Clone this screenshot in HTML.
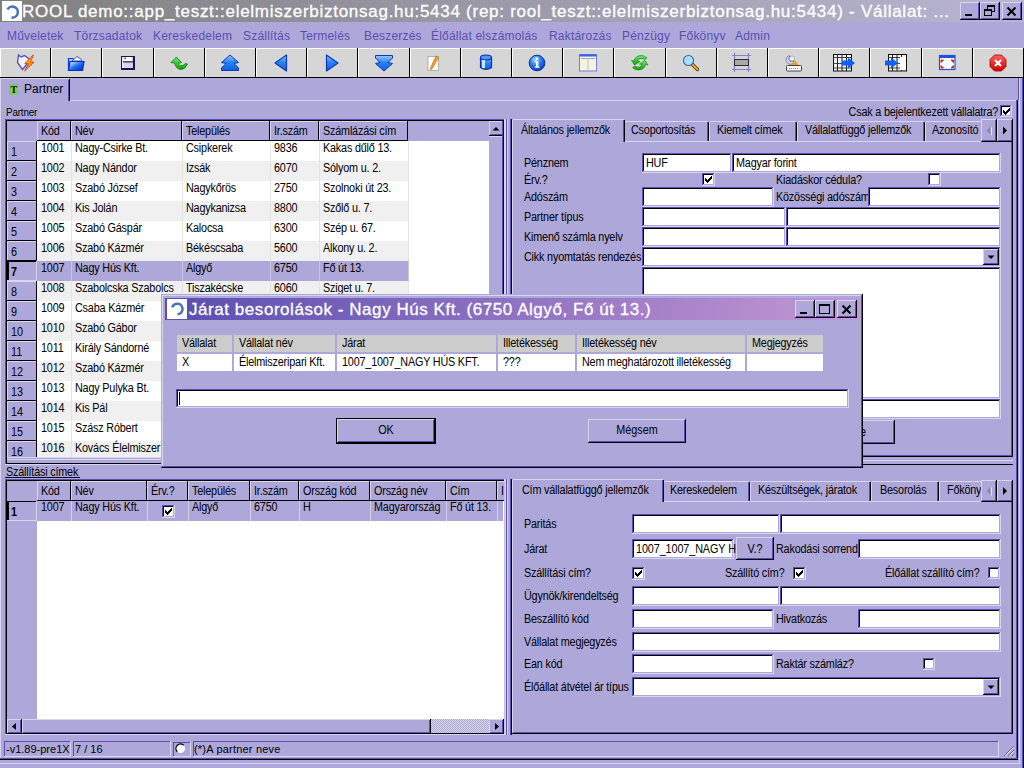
<!DOCTYPE html><html><head><meta charset="utf-8"><style>html,body{margin:0;padding:0;width:1024px;height:768px;overflow:hidden;background:#ADA8D9;position:relative;font-family:"Liberation Sans", sans-serif}.a{position:absolute;box-sizing:border-box}.t{position:absolute;white-space:pre;font-family:"Liberation Sans", sans-serif}</style></head><body><div class="a" style="left:0;top:0;width:1024px;height:22px;background:linear-gradient(to right,#808080,#B9B5D3)"></div><div class="a" style="left:2px;top:1px;width:20px;height:20px;background:#FFFFFF;"></div><svg class="a" style="left:2px;top:1px" width="20" height="20" viewBox="0 0 20 20"><path d="M5.5 8.5 A5.5 5.5 0 1 1 9.5 16.5" fill="none" stroke="#4A74C0" stroke-width="2.6"/></svg><div class="t" style="left:22px;top:2.61px;font-size:17px;line-height:17px;color:#fff;font-weight:400;letter-spacing:0.73px;-webkit-text-stroke:0.3px #fff">ROOL demo::app_teszt::elelmiszerbiztonsag.hu:5434 (rep: rool_teszt::elelmiszerbiztonsag.hu:5434) - Vállalat: ...</div><div class="a" style="left:960px;top:2px;width:20px;height:18px;background:#ADA8D9;"></div><div class="a" style="left:960px;top:2px;width:20px;height:1px;background:#D8D5EC;"></div><div class="a" style="left:960px;top:2px;width:1px;height:18px;background:#D8D5EC;"></div><div class="a" style="left:960px;top:19px;width:20px;height:1px;background:#000000;"></div><div class="a" style="left:979px;top:2px;width:1px;height:18px;background:#000000;"></div><div class="a" style="left:961px;top:18px;width:18px;height:1px;background:#5A4EB1;"></div><div class="a" style="left:978px;top:3px;width:1px;height:16px;background:#5A4EB1;"></div><div class="a" style="left:980px;top:2px;width:20px;height:18px;background:#ADA8D9;"></div><div class="a" style="left:980px;top:2px;width:20px;height:1px;background:#D8D5EC;"></div><div class="a" style="left:980px;top:2px;width:1px;height:18px;background:#D8D5EC;"></div><div class="a" style="left:980px;top:19px;width:20px;height:1px;background:#000000;"></div><div class="a" style="left:999px;top:2px;width:1px;height:18px;background:#000000;"></div><div class="a" style="left:981px;top:18px;width:18px;height:1px;background:#5A4EB1;"></div><div class="a" style="left:998px;top:3px;width:1px;height:16px;background:#5A4EB1;"></div><div class="a" style="left:1002px;top:2px;width:20px;height:18px;background:#ADA8D9;"></div><div class="a" style="left:1002px;top:2px;width:20px;height:1px;background:#D8D5EC;"></div><div class="a" style="left:1002px;top:2px;width:1px;height:18px;background:#D8D5EC;"></div><div class="a" style="left:1002px;top:19px;width:20px;height:1px;background:#000000;"></div><div class="a" style="left:1021px;top:2px;width:1px;height:18px;background:#000000;"></div><div class="a" style="left:1003px;top:18px;width:18px;height:1px;background:#5A4EB1;"></div><div class="a" style="left:1020px;top:3px;width:1px;height:16px;background:#5A4EB1;"></div><svg class="a" style="left:960px;top:2px" width="20" height="18" viewBox="0 0 20 18"><rect x="5" y="12" width="7" height="2" fill="#000"/></svg><svg class="a" style="left:980px;top:2px" width="20" height="18" viewBox="0 0 20 18"><rect x="7.5" y="3.5" width="7" height="6" fill="none" stroke="#000"/><rect x="7" y="3" width="8" height="2" fill="#000"/><rect x="4.5" y="7.5" width="7" height="6" fill="#ADA8D9" stroke="#000"/><rect x="4" y="7" width="8" height="2" fill="#000"/></svg><svg class="a" style="left:1002px;top:2px" width="20" height="18" viewBox="0 0 20 18"><path d="M5.5 5.5 L13.5 13.5 M13.5 5.5 L5.5 13.5" stroke="#000" stroke-width="2"/></svg><div class="t" style="left:7px;top:29.84px;font-size:12px;line-height:12px;color:#5A4EB1;font-weight:400;letter-spacing:0.2px;">Műveletek</div><div class="t" style="left:74px;top:29.84px;font-size:12px;line-height:12px;color:#5A4EB1;font-weight:400;letter-spacing:0.2px;">Törzsadatok</div><div class="t" style="left:153px;top:29.84px;font-size:12px;line-height:12px;color:#5A4EB1;font-weight:400;letter-spacing:0.2px;">Kereskedelem</div><div class="t" style="left:243px;top:29.84px;font-size:12px;line-height:12px;color:#5A4EB1;font-weight:400;letter-spacing:0.2px;">Szállítás</div><div class="t" style="left:300px;top:29.84px;font-size:12px;line-height:12px;color:#5A4EB1;font-weight:400;letter-spacing:0.2px;">Termelés</div><div class="t" style="left:364px;top:29.84px;font-size:12px;line-height:12px;color:#5A4EB1;font-weight:400;letter-spacing:0.2px;">Beszerzés</div><div class="t" style="left:431px;top:29.84px;font-size:12px;line-height:12px;color:#5A4EB1;font-weight:400;letter-spacing:0.2px;">Élőállat elszámolás</div><div class="t" style="left:549px;top:29.84px;font-size:12px;line-height:12px;color:#5A4EB1;font-weight:400;letter-spacing:0.2px;">Raktározás</div><div class="t" style="left:622px;top:29.84px;font-size:12px;line-height:12px;color:#5A4EB1;font-weight:400;letter-spacing:0.2px;">Pénzügy</div><div class="t" style="left:679px;top:29.84px;font-size:12px;line-height:12px;color:#5A4EB1;font-weight:400;letter-spacing:0.2px;">Főkönyv</div><div class="t" style="left:735px;top:29.84px;font-size:12px;line-height:12px;color:#5A4EB1;font-weight:400;letter-spacing:0.2px;">Admin</div><div class="a" style="left:0px;top:48px;width:51px;height:30px;background:#D6D6D6;"></div><div class="a" style="left:0px;top:48px;width:50px;height:1px;background:#FFFFFF;"></div><div class="a" style="left:0px;top:48px;width:1px;height:29px;background:#FFFFFF;"></div><div class="a" style="left:0px;top:77px;width:51px;height:1px;background:#000000;"></div><div class="a" style="left:50px;top:48px;width:1px;height:30px;background:#000000;"></div><div class="a" style="left:51px;top:48px;width:51px;height:30px;background:#D6D6D6;"></div><div class="a" style="left:51px;top:48px;width:50px;height:1px;background:#FFFFFF;"></div><div class="a" style="left:51px;top:48px;width:1px;height:29px;background:#FFFFFF;"></div><div class="a" style="left:51px;top:77px;width:51px;height:1px;background:#000000;"></div><div class="a" style="left:101px;top:48px;width:1px;height:30px;background:#000000;"></div><div class="a" style="left:102px;top:48px;width:52px;height:30px;background:#D6D6D6;"></div><div class="a" style="left:102px;top:48px;width:51px;height:1px;background:#FFFFFF;"></div><div class="a" style="left:102px;top:48px;width:1px;height:29px;background:#FFFFFF;"></div><div class="a" style="left:102px;top:77px;width:52px;height:1px;background:#000000;"></div><div class="a" style="left:153px;top:48px;width:1px;height:30px;background:#000000;"></div><div class="a" style="left:154px;top:48px;width:51px;height:30px;background:#D6D6D6;"></div><div class="a" style="left:154px;top:48px;width:50px;height:1px;background:#FFFFFF;"></div><div class="a" style="left:154px;top:48px;width:1px;height:29px;background:#FFFFFF;"></div><div class="a" style="left:154px;top:77px;width:51px;height:1px;background:#000000;"></div><div class="a" style="left:204px;top:48px;width:1px;height:30px;background:#000000;"></div><div class="a" style="left:205px;top:48px;width:51px;height:30px;background:#D6D6D6;"></div><div class="a" style="left:205px;top:48px;width:50px;height:1px;background:#FFFFFF;"></div><div class="a" style="left:205px;top:48px;width:1px;height:29px;background:#FFFFFF;"></div><div class="a" style="left:205px;top:77px;width:51px;height:1px;background:#000000;"></div><div class="a" style="left:255px;top:48px;width:1px;height:30px;background:#000000;"></div><div class="a" style="left:256px;top:48px;width:51px;height:30px;background:#D6D6D6;"></div><div class="a" style="left:256px;top:48px;width:50px;height:1px;background:#FFFFFF;"></div><div class="a" style="left:256px;top:48px;width:1px;height:29px;background:#FFFFFF;"></div><div class="a" style="left:256px;top:77px;width:51px;height:1px;background:#000000;"></div><div class="a" style="left:306px;top:48px;width:1px;height:30px;background:#000000;"></div><div class="a" style="left:307px;top:48px;width:51px;height:30px;background:#D6D6D6;"></div><div class="a" style="left:307px;top:48px;width:50px;height:1px;background:#FFFFFF;"></div><div class="a" style="left:307px;top:48px;width:1px;height:29px;background:#FFFFFF;"></div><div class="a" style="left:307px;top:77px;width:51px;height:1px;background:#000000;"></div><div class="a" style="left:357px;top:48px;width:1px;height:30px;background:#000000;"></div><div class="a" style="left:358px;top:48px;width:52px;height:30px;background:#D6D6D6;"></div><div class="a" style="left:358px;top:48px;width:51px;height:1px;background:#FFFFFF;"></div><div class="a" style="left:358px;top:48px;width:1px;height:29px;background:#FFFFFF;"></div><div class="a" style="left:358px;top:77px;width:52px;height:1px;background:#000000;"></div><div class="a" style="left:409px;top:48px;width:1px;height:30px;background:#000000;"></div><div class="a" style="left:410px;top:48px;width:51px;height:30px;background:#D6D6D6;"></div><div class="a" style="left:410px;top:48px;width:50px;height:1px;background:#FFFFFF;"></div><div class="a" style="left:410px;top:48px;width:1px;height:29px;background:#FFFFFF;"></div><div class="a" style="left:410px;top:77px;width:51px;height:1px;background:#000000;"></div><div class="a" style="left:460px;top:48px;width:1px;height:30px;background:#000000;"></div><div class="a" style="left:461px;top:48px;width:51px;height:30px;background:#D6D6D6;"></div><div class="a" style="left:461px;top:48px;width:50px;height:1px;background:#FFFFFF;"></div><div class="a" style="left:461px;top:48px;width:1px;height:29px;background:#FFFFFF;"></div><div class="a" style="left:461px;top:77px;width:51px;height:1px;background:#000000;"></div><div class="a" style="left:511px;top:48px;width:1px;height:30px;background:#000000;"></div><div class="a" style="left:512px;top:48px;width:51px;height:30px;background:#D6D6D6;"></div><div class="a" style="left:512px;top:48px;width:50px;height:1px;background:#FFFFFF;"></div><div class="a" style="left:512px;top:48px;width:1px;height:29px;background:#FFFFFF;"></div><div class="a" style="left:512px;top:77px;width:51px;height:1px;background:#000000;"></div><div class="a" style="left:562px;top:48px;width:1px;height:30px;background:#000000;"></div><div class="a" style="left:563px;top:48px;width:51px;height:30px;background:#D6D6D6;"></div><div class="a" style="left:563px;top:48px;width:50px;height:1px;background:#FFFFFF;"></div><div class="a" style="left:563px;top:48px;width:1px;height:29px;background:#FFFFFF;"></div><div class="a" style="left:563px;top:77px;width:51px;height:1px;background:#000000;"></div><div class="a" style="left:613px;top:48px;width:1px;height:30px;background:#000000;"></div><div class="a" style="left:614px;top:48px;width:52px;height:30px;background:#D6D6D6;"></div><div class="a" style="left:614px;top:48px;width:51px;height:1px;background:#FFFFFF;"></div><div class="a" style="left:614px;top:48px;width:1px;height:29px;background:#FFFFFF;"></div><div class="a" style="left:614px;top:77px;width:52px;height:1px;background:#000000;"></div><div class="a" style="left:665px;top:48px;width:1px;height:30px;background:#000000;"></div><div class="a" style="left:666px;top:48px;width:51px;height:30px;background:#D6D6D6;"></div><div class="a" style="left:666px;top:48px;width:50px;height:1px;background:#FFFFFF;"></div><div class="a" style="left:666px;top:48px;width:1px;height:29px;background:#FFFFFF;"></div><div class="a" style="left:666px;top:77px;width:51px;height:1px;background:#000000;"></div><div class="a" style="left:716px;top:48px;width:1px;height:30px;background:#000000;"></div><div class="a" style="left:717px;top:48px;width:51px;height:30px;background:#D6D6D6;"></div><div class="a" style="left:717px;top:48px;width:50px;height:1px;background:#FFFFFF;"></div><div class="a" style="left:717px;top:48px;width:1px;height:29px;background:#FFFFFF;"></div><div class="a" style="left:717px;top:77px;width:51px;height:1px;background:#000000;"></div><div class="a" style="left:767px;top:48px;width:1px;height:30px;background:#000000;"></div><div class="a" style="left:768px;top:48px;width:51px;height:30px;background:#D6D6D6;"></div><div class="a" style="left:768px;top:48px;width:50px;height:1px;background:#FFFFFF;"></div><div class="a" style="left:768px;top:48px;width:1px;height:29px;background:#FFFFFF;"></div><div class="a" style="left:768px;top:77px;width:51px;height:1px;background:#000000;"></div><div class="a" style="left:818px;top:48px;width:1px;height:30px;background:#000000;"></div><div class="a" style="left:819px;top:48px;width:51px;height:30px;background:#D6D6D6;"></div><div class="a" style="left:819px;top:48px;width:50px;height:1px;background:#FFFFFF;"></div><div class="a" style="left:819px;top:48px;width:1px;height:29px;background:#FFFFFF;"></div><div class="a" style="left:819px;top:77px;width:51px;height:1px;background:#000000;"></div><div class="a" style="left:869px;top:48px;width:1px;height:30px;background:#000000;"></div><div class="a" style="left:870px;top:48px;width:52px;height:30px;background:#D6D6D6;"></div><div class="a" style="left:870px;top:48px;width:51px;height:1px;background:#FFFFFF;"></div><div class="a" style="left:870px;top:48px;width:1px;height:29px;background:#FFFFFF;"></div><div class="a" style="left:870px;top:77px;width:52px;height:1px;background:#000000;"></div><div class="a" style="left:921px;top:48px;width:1px;height:30px;background:#000000;"></div><div class="a" style="left:922px;top:48px;width:51px;height:30px;background:#D6D6D6;"></div><div class="a" style="left:922px;top:48px;width:50px;height:1px;background:#FFFFFF;"></div><div class="a" style="left:922px;top:48px;width:1px;height:29px;background:#FFFFFF;"></div><div class="a" style="left:922px;top:77px;width:51px;height:1px;background:#000000;"></div><div class="a" style="left:972px;top:48px;width:1px;height:30px;background:#000000;"></div><div class="a" style="left:973px;top:48px;width:51px;height:30px;background:#D6D6D6;"></div><div class="a" style="left:973px;top:48px;width:50px;height:1px;background:#FFFFFF;"></div><div class="a" style="left:973px;top:48px;width:1px;height:29px;background:#FFFFFF;"></div><div class="a" style="left:973px;top:77px;width:51px;height:1px;background:#000000;"></div><div class="a" style="left:1023px;top:48px;width:1px;height:30px;background:#000000;"></div><div class="a" style="left:0px;top:78px;width:70px;height:23px;background:#ADA8D9;"></div><div class="a" style="left:0px;top:78px;width:1px;height:23px;background:#D8D5EC;"></div><div class="a" style="left:1px;top:78px;width:68px;height:1px;background:#D8D5EC;"></div><div class="a" style="left:69px;top:79px;width:1px;height:22px;background:#000000;"></div><div class="a" style="left:68px;top:80px;width:1px;height:21px;background:#5A4EB1;"></div><div class="a" style="left:70px;top:100px;width:947px;height:1px;background:#D8D5EC;"></div><div class="a" style="left:9px;top:84px;width:9px;height:11px;background:#7FC860;"></div><div class="t" style="left:10.5px;top:84.53px;font-size:10px;line-height:10px;color:#201000;font-weight:700;letter-spacing:0px;font-family:'Liberation Serif'">T</div><div class="t" style="left:24px;top:82.84px;font-size:12px;line-height:12px;color:#000;font-weight:400;letter-spacing:0px;">Partner</div><div class="t" style="left:6px;top:106.69px;font-size:11px;line-height:11px;color:#000;font-weight:400;letter-spacing:-0.2px;transform:scaleX(0.9);transform-origin:left;">Partner</div><div class="t" style="right:26px;top:105.84px;font-size:12px;line-height:12px;color:#000;font-weight:400;letter-spacing:-0.2px;transform:scaleX(0.9);transform-origin:right;">Csak a bejelentkezett vállalatra?</div><div class="a" style="left:1000px;top:105px;width:12px;height:12px;background:#FFFFFF;"></div><div class="a" style="left:1000px;top:105px;width:12px;height:1px;background:#5A4EB1;"></div><div class="a" style="left:1000px;top:105px;width:1px;height:12px;background:#5A4EB1;"></div><div class="a" style="left:1001px;top:106px;width:10px;height:1px;background:#000000;"></div><div class="a" style="left:1001px;top:106px;width:1px;height:10px;background:#000000;"></div><div class="a" style="left:1001px;top:115px;width:10px;height:1px;background:#ADA8D9;"></div><div class="a" style="left:1010px;top:106px;width:1px;height:10px;background:#ADA8D9;"></div><div class="a" style="left:1000px;top:116px;width:12px;height:1px;background:#D8D5EC;"></div><div class="a" style="left:1011px;top:105px;width:1px;height:12px;background:#D8D5EC;"></div><svg class="a" style="left:1000px;top:105px" width="12" height="12" shape-rendering="crispEdges" fill="#000"><rect x="9" y="3" width="1" height="1"/><rect x="8" y="4" width="1" height="1"/><rect x="9" y="4" width="1" height="1"/><rect x="3" y="5" width="1" height="1"/><rect x="7" y="5" width="1" height="1"/><rect x="8" y="5" width="1" height="1"/><rect x="9" y="5" width="1" height="1"/><rect x="3" y="6" width="1" height="1"/><rect x="4" y="6" width="1" height="1"/><rect x="6" y="6" width="1" height="1"/><rect x="7" y="6" width="1" height="1"/><rect x="8" y="6" width="1" height="1"/><rect x="3" y="7" width="1" height="1"/><rect x="4" y="7" width="1" height="1"/><rect x="5" y="7" width="1" height="1"/><rect x="6" y="7" width="1" height="1"/><rect x="7" y="7" width="1" height="1"/><rect x="4" y="8" width="1" height="1"/><rect x="5" y="8" width="1" height="1"/><rect x="6" y="8" width="1" height="1"/><rect x="5" y="9" width="1" height="1"/></svg><div class="a" style="left:5px;top:119px;width:500px;height:346px;background:#FFFFFF;"></div><div class="a" style="left:5px;top:119px;width:500px;height:1px;background:#5A4EB1;"></div><div class="a" style="left:5px;top:119px;width:1px;height:346px;background:#5A4EB1;"></div><div class="a" style="left:6px;top:120px;width:498px;height:1px;background:#000000;"></div><div class="a" style="left:6px;top:120px;width:1px;height:344px;background:#000000;"></div><div class="a" style="left:5px;top:464px;width:500px;height:1px;background:#D8D5EC;"></div><div class="a" style="left:504px;top:119px;width:1px;height:346px;background:#D8D5EC;"></div><div class="a" style="left:7px;top:121px;width:482px;height:20px;background:#ADA8D9;"></div><div class="a" style="left:37px;top:121px;width:34px;height:20px;background:#ADA8D9;"></div><div class="a" style="left:37px;top:121px;width:34px;height:1px;background:#D8D5EC;"></div><div class="a" style="left:37px;top:121px;width:1px;height:20px;background:#D8D5EC;"></div><div class="a" style="left:37px;top:140px;width:34px;height:1px;background:#000000;"></div><div class="a" style="left:70px;top:121px;width:1px;height:20px;background:#000000;"></div><div class="t" style="left:41px;top:124.84px;font-size:12px;line-height:12px;color:#000;font-weight:400;letter-spacing:-0.2px;transform:scaleX(0.9);transform-origin:left;">Kód</div><div class="a" style="left:71px;top:121px;width:111px;height:20px;background:#ADA8D9;"></div><div class="a" style="left:71px;top:121px;width:111px;height:1px;background:#D8D5EC;"></div><div class="a" style="left:71px;top:121px;width:1px;height:20px;background:#D8D5EC;"></div><div class="a" style="left:71px;top:140px;width:111px;height:1px;background:#000000;"></div><div class="a" style="left:181px;top:121px;width:1px;height:20px;background:#000000;"></div><div class="t" style="left:75px;top:124.84px;font-size:12px;line-height:12px;color:#000;font-weight:400;letter-spacing:-0.2px;transform:scaleX(0.9);transform-origin:left;">Név</div><div class="a" style="left:182px;top:121px;width:88px;height:20px;background:#ADA8D9;"></div><div class="a" style="left:182px;top:121px;width:88px;height:1px;background:#D8D5EC;"></div><div class="a" style="left:182px;top:121px;width:1px;height:20px;background:#D8D5EC;"></div><div class="a" style="left:182px;top:140px;width:88px;height:1px;background:#000000;"></div><div class="a" style="left:269px;top:121px;width:1px;height:20px;background:#000000;"></div><div class="t" style="left:186px;top:124.84px;font-size:12px;line-height:12px;color:#000;font-weight:400;letter-spacing:-0.2px;transform:scaleX(0.9);transform-origin:left;">Település</div><div class="a" style="left:270px;top:121px;width:49px;height:20px;background:#ADA8D9;"></div><div class="a" style="left:270px;top:121px;width:49px;height:1px;background:#D8D5EC;"></div><div class="a" style="left:270px;top:121px;width:1px;height:20px;background:#D8D5EC;"></div><div class="a" style="left:270px;top:140px;width:49px;height:1px;background:#000000;"></div><div class="a" style="left:318px;top:121px;width:1px;height:20px;background:#000000;"></div><div class="t" style="left:274px;top:124.84px;font-size:12px;line-height:12px;color:#000;font-weight:400;letter-spacing:-0.2px;transform:scaleX(0.9);transform-origin:left;">Ir.szám</div><div class="a" style="left:319px;top:121px;width:89px;height:20px;background:#ADA8D9;"></div><div class="a" style="left:319px;top:121px;width:89px;height:1px;background:#D8D5EC;"></div><div class="a" style="left:319px;top:121px;width:1px;height:20px;background:#D8D5EC;"></div><div class="a" style="left:319px;top:140px;width:89px;height:1px;background:#000000;"></div><div class="a" style="left:407px;top:121px;width:1px;height:20px;background:#000000;"></div><div class="t" style="left:323px;top:124.84px;font-size:12px;line-height:12px;color:#000;font-weight:400;letter-spacing:-0.2px;transform:scaleX(0.9);transform-origin:left;">Számlázási cím</div><div class="a" style="left:37px;top:141px;width:371px;height:20px;background:#FFFFFF;"></div><div class="a" style="left:71px;top:141px;width:1px;height:20px;background:#E4E4E4;"></div><div class="a" style="left:182px;top:141px;width:1px;height:20px;background:#E4E4E4;"></div><div class="a" style="left:270px;top:141px;width:1px;height:20px;background:#E4E4E4;"></div><div class="a" style="left:319px;top:141px;width:1px;height:20px;background:#E4E4E4;"></div><div class="a" style="left:408px;top:141px;width:1px;height:20px;background:#E4E4E4;"></div><div class="a" style="left:7px;top:141px;width:30px;height:20px;background:#ADA8D9;"></div><div class="a" style="left:7px;top:141px;width:30px;height:1px;background:#D8D5EC;"></div><div class="a" style="left:7px;top:141px;width:1px;height:20px;background:#D8D5EC;"></div><div class="a" style="left:7px;top:160px;width:30px;height:1px;background:#000000;"></div><div class="a" style="left:36px;top:141px;width:1px;height:20px;background:#000000;"></div><div class="t" style="left:11px;top:145.84px;font-size:12px;line-height:12px;color:#000;font-weight:400;letter-spacing:0px;transform:scaleX(0.9);transform-origin:left;">1</div><div class="t" style="left:41px;top:141.84px;font-size:12px;line-height:12px;color:#000;font-weight:400;letter-spacing:-0.2px;transform:scaleX(0.9);transform-origin:left;">1001</div><div class="t" style="left:75px;top:141.84px;font-size:12px;line-height:12px;color:#000;font-weight:400;letter-spacing:-0.2px;transform:scaleX(0.9);transform-origin:left;">Nagy-Csirke Bt.</div><div class="t" style="left:186px;top:141.84px;font-size:12px;line-height:12px;color:#000;font-weight:400;letter-spacing:-0.2px;transform:scaleX(0.9);transform-origin:left;">Csipkerek</div><div class="t" style="left:274px;top:141.84px;font-size:12px;line-height:12px;color:#000;font-weight:400;letter-spacing:-0.2px;transform:scaleX(0.9);transform-origin:left;">9836</div><div class="t" style="left:323px;top:141.84px;font-size:12px;line-height:12px;color:#000;font-weight:400;letter-spacing:-0.2px;transform:scaleX(0.9);transform-origin:left;">Kakas dűlő 13.</div><div class="a" style="left:37px;top:161px;width:371px;height:20px;background:#F0F0F0;"></div><div class="a" style="left:71px;top:161px;width:1px;height:20px;background:#E4E4E4;"></div><div class="a" style="left:182px;top:161px;width:1px;height:20px;background:#E4E4E4;"></div><div class="a" style="left:270px;top:161px;width:1px;height:20px;background:#E4E4E4;"></div><div class="a" style="left:319px;top:161px;width:1px;height:20px;background:#E4E4E4;"></div><div class="a" style="left:408px;top:161px;width:1px;height:20px;background:#E4E4E4;"></div><div class="a" style="left:7px;top:161px;width:30px;height:20px;background:#ADA8D9;"></div><div class="a" style="left:7px;top:161px;width:30px;height:1px;background:#D8D5EC;"></div><div class="a" style="left:7px;top:161px;width:1px;height:20px;background:#D8D5EC;"></div><div class="a" style="left:7px;top:180px;width:30px;height:1px;background:#000000;"></div><div class="a" style="left:36px;top:161px;width:1px;height:20px;background:#000000;"></div><div class="t" style="left:11px;top:165.84px;font-size:12px;line-height:12px;color:#000;font-weight:400;letter-spacing:0px;transform:scaleX(0.9);transform-origin:left;">2</div><div class="t" style="left:41px;top:161.84px;font-size:12px;line-height:12px;color:#000;font-weight:400;letter-spacing:-0.2px;transform:scaleX(0.9);transform-origin:left;">1002</div><div class="t" style="left:75px;top:161.84px;font-size:12px;line-height:12px;color:#000;font-weight:400;letter-spacing:-0.2px;transform:scaleX(0.9);transform-origin:left;">Nagy Nándor</div><div class="t" style="left:186px;top:161.84px;font-size:12px;line-height:12px;color:#000;font-weight:400;letter-spacing:-0.2px;transform:scaleX(0.9);transform-origin:left;">Izsák</div><div class="t" style="left:274px;top:161.84px;font-size:12px;line-height:12px;color:#000;font-weight:400;letter-spacing:-0.2px;transform:scaleX(0.9);transform-origin:left;">6070</div><div class="t" style="left:323px;top:161.84px;font-size:12px;line-height:12px;color:#000;font-weight:400;letter-spacing:-0.2px;transform:scaleX(0.9);transform-origin:left;">Sólyom u. 2.</div><div class="a" style="left:37px;top:181px;width:371px;height:20px;background:#FFFFFF;"></div><div class="a" style="left:71px;top:181px;width:1px;height:20px;background:#E4E4E4;"></div><div class="a" style="left:182px;top:181px;width:1px;height:20px;background:#E4E4E4;"></div><div class="a" style="left:270px;top:181px;width:1px;height:20px;background:#E4E4E4;"></div><div class="a" style="left:319px;top:181px;width:1px;height:20px;background:#E4E4E4;"></div><div class="a" style="left:408px;top:181px;width:1px;height:20px;background:#E4E4E4;"></div><div class="a" style="left:7px;top:181px;width:30px;height:20px;background:#ADA8D9;"></div><div class="a" style="left:7px;top:181px;width:30px;height:1px;background:#D8D5EC;"></div><div class="a" style="left:7px;top:181px;width:1px;height:20px;background:#D8D5EC;"></div><div class="a" style="left:7px;top:200px;width:30px;height:1px;background:#000000;"></div><div class="a" style="left:36px;top:181px;width:1px;height:20px;background:#000000;"></div><div class="t" style="left:11px;top:185.84px;font-size:12px;line-height:12px;color:#000;font-weight:400;letter-spacing:0px;transform:scaleX(0.9);transform-origin:left;">3</div><div class="t" style="left:41px;top:181.84px;font-size:12px;line-height:12px;color:#000;font-weight:400;letter-spacing:-0.2px;transform:scaleX(0.9);transform-origin:left;">1003</div><div class="t" style="left:75px;top:181.84px;font-size:12px;line-height:12px;color:#000;font-weight:400;letter-spacing:-0.2px;transform:scaleX(0.9);transform-origin:left;">Szabó József</div><div class="t" style="left:186px;top:181.84px;font-size:12px;line-height:12px;color:#000;font-weight:400;letter-spacing:-0.2px;transform:scaleX(0.9);transform-origin:left;">Nagykőrös</div><div class="t" style="left:274px;top:181.84px;font-size:12px;line-height:12px;color:#000;font-weight:400;letter-spacing:-0.2px;transform:scaleX(0.9);transform-origin:left;">2750</div><div class="t" style="left:323px;top:181.84px;font-size:12px;line-height:12px;color:#000;font-weight:400;letter-spacing:-0.2px;transform:scaleX(0.9);transform-origin:left;">Szolnoki út 23.</div><div class="a" style="left:37px;top:201px;width:371px;height:20px;background:#F0F0F0;"></div><div class="a" style="left:71px;top:201px;width:1px;height:20px;background:#E4E4E4;"></div><div class="a" style="left:182px;top:201px;width:1px;height:20px;background:#E4E4E4;"></div><div class="a" style="left:270px;top:201px;width:1px;height:20px;background:#E4E4E4;"></div><div class="a" style="left:319px;top:201px;width:1px;height:20px;background:#E4E4E4;"></div><div class="a" style="left:408px;top:201px;width:1px;height:20px;background:#E4E4E4;"></div><div class="a" style="left:7px;top:201px;width:30px;height:20px;background:#ADA8D9;"></div><div class="a" style="left:7px;top:201px;width:30px;height:1px;background:#D8D5EC;"></div><div class="a" style="left:7px;top:201px;width:1px;height:20px;background:#D8D5EC;"></div><div class="a" style="left:7px;top:220px;width:30px;height:1px;background:#000000;"></div><div class="a" style="left:36px;top:201px;width:1px;height:20px;background:#000000;"></div><div class="t" style="left:11px;top:205.84px;font-size:12px;line-height:12px;color:#000;font-weight:400;letter-spacing:0px;transform:scaleX(0.9);transform-origin:left;">4</div><div class="t" style="left:41px;top:201.84px;font-size:12px;line-height:12px;color:#000;font-weight:400;letter-spacing:-0.2px;transform:scaleX(0.9);transform-origin:left;">1004</div><div class="t" style="left:75px;top:201.84px;font-size:12px;line-height:12px;color:#000;font-weight:400;letter-spacing:-0.2px;transform:scaleX(0.9);transform-origin:left;">Kis Jolán</div><div class="t" style="left:186px;top:201.84px;font-size:12px;line-height:12px;color:#000;font-weight:400;letter-spacing:-0.2px;transform:scaleX(0.9);transform-origin:left;">Nagykanizsa</div><div class="t" style="left:274px;top:201.84px;font-size:12px;line-height:12px;color:#000;font-weight:400;letter-spacing:-0.2px;transform:scaleX(0.9);transform-origin:left;">8800</div><div class="t" style="left:323px;top:201.84px;font-size:12px;line-height:12px;color:#000;font-weight:400;letter-spacing:-0.2px;transform:scaleX(0.9);transform-origin:left;">Szőlő u. 7.</div><div class="a" style="left:37px;top:221px;width:371px;height:20px;background:#FFFFFF;"></div><div class="a" style="left:71px;top:221px;width:1px;height:20px;background:#E4E4E4;"></div><div class="a" style="left:182px;top:221px;width:1px;height:20px;background:#E4E4E4;"></div><div class="a" style="left:270px;top:221px;width:1px;height:20px;background:#E4E4E4;"></div><div class="a" style="left:319px;top:221px;width:1px;height:20px;background:#E4E4E4;"></div><div class="a" style="left:408px;top:221px;width:1px;height:20px;background:#E4E4E4;"></div><div class="a" style="left:7px;top:221px;width:30px;height:20px;background:#ADA8D9;"></div><div class="a" style="left:7px;top:221px;width:30px;height:1px;background:#D8D5EC;"></div><div class="a" style="left:7px;top:221px;width:1px;height:20px;background:#D8D5EC;"></div><div class="a" style="left:7px;top:240px;width:30px;height:1px;background:#000000;"></div><div class="a" style="left:36px;top:221px;width:1px;height:20px;background:#000000;"></div><div class="t" style="left:11px;top:225.84px;font-size:12px;line-height:12px;color:#000;font-weight:400;letter-spacing:0px;transform:scaleX(0.9);transform-origin:left;">5</div><div class="t" style="left:41px;top:221.84px;font-size:12px;line-height:12px;color:#000;font-weight:400;letter-spacing:-0.2px;transform:scaleX(0.9);transform-origin:left;">1005</div><div class="t" style="left:75px;top:221.84px;font-size:12px;line-height:12px;color:#000;font-weight:400;letter-spacing:-0.2px;transform:scaleX(0.9);transform-origin:left;">Szabó Gáspár</div><div class="t" style="left:186px;top:221.84px;font-size:12px;line-height:12px;color:#000;font-weight:400;letter-spacing:-0.2px;transform:scaleX(0.9);transform-origin:left;">Kalocsa</div><div class="t" style="left:274px;top:221.84px;font-size:12px;line-height:12px;color:#000;font-weight:400;letter-spacing:-0.2px;transform:scaleX(0.9);transform-origin:left;">6300</div><div class="t" style="left:323px;top:221.84px;font-size:12px;line-height:12px;color:#000;font-weight:400;letter-spacing:-0.2px;transform:scaleX(0.9);transform-origin:left;">Szép u. 67.</div><div class="a" style="left:37px;top:241px;width:371px;height:20px;background:#F0F0F0;"></div><div class="a" style="left:71px;top:241px;width:1px;height:20px;background:#E4E4E4;"></div><div class="a" style="left:182px;top:241px;width:1px;height:20px;background:#E4E4E4;"></div><div class="a" style="left:270px;top:241px;width:1px;height:20px;background:#E4E4E4;"></div><div class="a" style="left:319px;top:241px;width:1px;height:20px;background:#E4E4E4;"></div><div class="a" style="left:408px;top:241px;width:1px;height:20px;background:#E4E4E4;"></div><div class="a" style="left:7px;top:241px;width:30px;height:20px;background:#ADA8D9;"></div><div class="a" style="left:7px;top:241px;width:30px;height:1px;background:#D8D5EC;"></div><div class="a" style="left:7px;top:241px;width:1px;height:20px;background:#D8D5EC;"></div><div class="a" style="left:7px;top:260px;width:30px;height:1px;background:#000000;"></div><div class="a" style="left:36px;top:241px;width:1px;height:20px;background:#000000;"></div><div class="t" style="left:11px;top:245.84px;font-size:12px;line-height:12px;color:#000;font-weight:400;letter-spacing:0px;transform:scaleX(0.9);transform-origin:left;">6</div><div class="t" style="left:41px;top:241.84px;font-size:12px;line-height:12px;color:#000;font-weight:400;letter-spacing:-0.2px;transform:scaleX(0.9);transform-origin:left;">1006</div><div class="t" style="left:75px;top:241.84px;font-size:12px;line-height:12px;color:#000;font-weight:400;letter-spacing:-0.2px;transform:scaleX(0.9);transform-origin:left;">Szabó Kázmér</div><div class="t" style="left:186px;top:241.84px;font-size:12px;line-height:12px;color:#000;font-weight:400;letter-spacing:-0.2px;transform:scaleX(0.9);transform-origin:left;">Békéscsaba</div><div class="t" style="left:274px;top:241.84px;font-size:12px;line-height:12px;color:#000;font-weight:400;letter-spacing:-0.2px;transform:scaleX(0.9);transform-origin:left;">5600</div><div class="t" style="left:323px;top:241.84px;font-size:12px;line-height:12px;color:#000;font-weight:400;letter-spacing:-0.2px;transform:scaleX(0.9);transform-origin:left;">Alkony u. 2.</div><div class="a" style="left:37px;top:261px;width:371px;height:20px;background:#ADA8D9;"></div><div class="a" style="left:71px;top:261px;width:1px;height:20px;background:#C8C4E4;"></div><div class="a" style="left:182px;top:261px;width:1px;height:20px;background:#C8C4E4;"></div><div class="a" style="left:270px;top:261px;width:1px;height:20px;background:#C8C4E4;"></div><div class="a" style="left:319px;top:261px;width:1px;height:20px;background:#C8C4E4;"></div><div class="a" style="left:408px;top:261px;width:1px;height:20px;background:#C8C4E4;"></div><div class="a" style="left:7px;top:261px;width:30px;height:20px;background:#ADA8D9;"></div><div class="a" style="left:7px;top:261px;width:30px;height:1px;background:#000000;"></div><div class="a" style="left:7px;top:261px;width:2px;height:20px;background:#000000;"></div><div class="a" style="left:7px;top:280px;width:30px;height:1px;background:#D8D5EC;"></div><div class="a" style="left:36px;top:261px;width:1px;height:20px;background:#D8D5EC;"></div><div class="t" style="left:11px;top:265.84px;font-size:12px;line-height:12px;color:#000;font-weight:700;letter-spacing:0px;transform:scaleX(0.9);transform-origin:left;">7</div><div class="t" style="left:41px;top:261.84px;font-size:12px;line-height:12px;color:#000;font-weight:400;letter-spacing:-0.2px;transform:scaleX(0.9);transform-origin:left;">1007</div><div class="t" style="left:75px;top:261.84px;font-size:12px;line-height:12px;color:#000;font-weight:400;letter-spacing:-0.2px;transform:scaleX(0.9);transform-origin:left;">Nagy Hús Kft.</div><div class="t" style="left:186px;top:261.84px;font-size:12px;line-height:12px;color:#000;font-weight:400;letter-spacing:-0.2px;transform:scaleX(0.9);transform-origin:left;">Algyő</div><div class="t" style="left:274px;top:261.84px;font-size:12px;line-height:12px;color:#000;font-weight:400;letter-spacing:-0.2px;transform:scaleX(0.9);transform-origin:left;">6750</div><div class="t" style="left:323px;top:261.84px;font-size:12px;line-height:12px;color:#000;font-weight:400;letter-spacing:-0.2px;transform:scaleX(0.9);transform-origin:left;">Fő út 13.</div><div class="a" style="left:37px;top:281px;width:371px;height:20px;background:#F0F0F0;"></div><div class="a" style="left:71px;top:281px;width:1px;height:20px;background:#E4E4E4;"></div><div class="a" style="left:182px;top:281px;width:1px;height:20px;background:#E4E4E4;"></div><div class="a" style="left:270px;top:281px;width:1px;height:20px;background:#E4E4E4;"></div><div class="a" style="left:319px;top:281px;width:1px;height:20px;background:#E4E4E4;"></div><div class="a" style="left:408px;top:281px;width:1px;height:20px;background:#E4E4E4;"></div><div class="a" style="left:7px;top:281px;width:30px;height:20px;background:#ADA8D9;"></div><div class="a" style="left:7px;top:281px;width:30px;height:1px;background:#D8D5EC;"></div><div class="a" style="left:7px;top:281px;width:1px;height:20px;background:#D8D5EC;"></div><div class="a" style="left:7px;top:300px;width:30px;height:1px;background:#000000;"></div><div class="a" style="left:36px;top:281px;width:1px;height:20px;background:#000000;"></div><div class="t" style="left:11px;top:285.84px;font-size:12px;line-height:12px;color:#000;font-weight:400;letter-spacing:0px;transform:scaleX(0.9);transform-origin:left;">8</div><div class="t" style="left:41px;top:281.84px;font-size:12px;line-height:12px;color:#000;font-weight:400;letter-spacing:-0.2px;transform:scaleX(0.9);transform-origin:left;">1008</div><div class="t" style="left:75px;top:281.84px;font-size:12px;line-height:12px;color:#000;font-weight:400;letter-spacing:-0.2px;transform:scaleX(0.9);transform-origin:left;">Szabolcska Szabolcs</div><div class="t" style="left:186px;top:281.84px;font-size:12px;line-height:12px;color:#000;font-weight:400;letter-spacing:-0.2px;transform:scaleX(0.9);transform-origin:left;">Tiszakécske</div><div class="t" style="left:274px;top:281.84px;font-size:12px;line-height:12px;color:#000;font-weight:400;letter-spacing:-0.2px;transform:scaleX(0.9);transform-origin:left;">6060</div><div class="t" style="left:323px;top:281.84px;font-size:12px;line-height:12px;color:#000;font-weight:400;letter-spacing:-0.2px;transform:scaleX(0.9);transform-origin:left;">Sziget u. 7.</div><div class="a" style="left:37px;top:301px;width:371px;height:20px;background:#FFFFFF;"></div><div class="a" style="left:71px;top:301px;width:1px;height:20px;background:#E4E4E4;"></div><div class="a" style="left:182px;top:301px;width:1px;height:20px;background:#E4E4E4;"></div><div class="a" style="left:270px;top:301px;width:1px;height:20px;background:#E4E4E4;"></div><div class="a" style="left:319px;top:301px;width:1px;height:20px;background:#E4E4E4;"></div><div class="a" style="left:408px;top:301px;width:1px;height:20px;background:#E4E4E4;"></div><div class="a" style="left:7px;top:301px;width:30px;height:20px;background:#ADA8D9;"></div><div class="a" style="left:7px;top:301px;width:30px;height:1px;background:#D8D5EC;"></div><div class="a" style="left:7px;top:301px;width:1px;height:20px;background:#D8D5EC;"></div><div class="a" style="left:7px;top:320px;width:30px;height:1px;background:#000000;"></div><div class="a" style="left:36px;top:301px;width:1px;height:20px;background:#000000;"></div><div class="t" style="left:11px;top:305.84px;font-size:12px;line-height:12px;color:#000;font-weight:400;letter-spacing:0px;transform:scaleX(0.9);transform-origin:left;">9</div><div class="t" style="left:41px;top:301.84px;font-size:12px;line-height:12px;color:#000;font-weight:400;letter-spacing:-0.2px;transform:scaleX(0.9);transform-origin:left;">1009</div><div class="t" style="left:75px;top:301.84px;font-size:12px;line-height:12px;color:#000;font-weight:400;letter-spacing:-0.2px;transform:scaleX(0.9);transform-origin:left;">Csaba Kázmér</div><div class="a" style="left:37px;top:321px;width:371px;height:20px;background:#F0F0F0;"></div><div class="a" style="left:71px;top:321px;width:1px;height:20px;background:#E4E4E4;"></div><div class="a" style="left:182px;top:321px;width:1px;height:20px;background:#E4E4E4;"></div><div class="a" style="left:270px;top:321px;width:1px;height:20px;background:#E4E4E4;"></div><div class="a" style="left:319px;top:321px;width:1px;height:20px;background:#E4E4E4;"></div><div class="a" style="left:408px;top:321px;width:1px;height:20px;background:#E4E4E4;"></div><div class="a" style="left:7px;top:321px;width:30px;height:20px;background:#ADA8D9;"></div><div class="a" style="left:7px;top:321px;width:30px;height:1px;background:#D8D5EC;"></div><div class="a" style="left:7px;top:321px;width:1px;height:20px;background:#D8D5EC;"></div><div class="a" style="left:7px;top:340px;width:30px;height:1px;background:#000000;"></div><div class="a" style="left:36px;top:321px;width:1px;height:20px;background:#000000;"></div><div class="t" style="left:11px;top:325.84px;font-size:12px;line-height:12px;color:#000;font-weight:400;letter-spacing:0px;transform:scaleX(0.9);transform-origin:left;">10</div><div class="t" style="left:41px;top:321.84px;font-size:12px;line-height:12px;color:#000;font-weight:400;letter-spacing:-0.2px;transform:scaleX(0.9);transform-origin:left;">1010</div><div class="t" style="left:75px;top:321.84px;font-size:12px;line-height:12px;color:#000;font-weight:400;letter-spacing:-0.2px;transform:scaleX(0.9);transform-origin:left;">Szabó Gábor</div><div class="a" style="left:37px;top:341px;width:371px;height:20px;background:#FFFFFF;"></div><div class="a" style="left:71px;top:341px;width:1px;height:20px;background:#E4E4E4;"></div><div class="a" style="left:182px;top:341px;width:1px;height:20px;background:#E4E4E4;"></div><div class="a" style="left:270px;top:341px;width:1px;height:20px;background:#E4E4E4;"></div><div class="a" style="left:319px;top:341px;width:1px;height:20px;background:#E4E4E4;"></div><div class="a" style="left:408px;top:341px;width:1px;height:20px;background:#E4E4E4;"></div><div class="a" style="left:7px;top:341px;width:30px;height:20px;background:#ADA8D9;"></div><div class="a" style="left:7px;top:341px;width:30px;height:1px;background:#D8D5EC;"></div><div class="a" style="left:7px;top:341px;width:1px;height:20px;background:#D8D5EC;"></div><div class="a" style="left:7px;top:360px;width:30px;height:1px;background:#000000;"></div><div class="a" style="left:36px;top:341px;width:1px;height:20px;background:#000000;"></div><div class="t" style="left:11px;top:345.84px;font-size:12px;line-height:12px;color:#000;font-weight:400;letter-spacing:0px;transform:scaleX(0.9);transform-origin:left;">11</div><div class="t" style="left:41px;top:341.84px;font-size:12px;line-height:12px;color:#000;font-weight:400;letter-spacing:-0.2px;transform:scaleX(0.9);transform-origin:left;">1011</div><div class="t" style="left:75px;top:341.84px;font-size:12px;line-height:12px;color:#000;font-weight:400;letter-spacing:-0.2px;transform:scaleX(0.9);transform-origin:left;">Király Sándorné</div><div class="a" style="left:37px;top:361px;width:371px;height:20px;background:#F0F0F0;"></div><div class="a" style="left:71px;top:361px;width:1px;height:20px;background:#E4E4E4;"></div><div class="a" style="left:182px;top:361px;width:1px;height:20px;background:#E4E4E4;"></div><div class="a" style="left:270px;top:361px;width:1px;height:20px;background:#E4E4E4;"></div><div class="a" style="left:319px;top:361px;width:1px;height:20px;background:#E4E4E4;"></div><div class="a" style="left:408px;top:361px;width:1px;height:20px;background:#E4E4E4;"></div><div class="a" style="left:7px;top:361px;width:30px;height:20px;background:#ADA8D9;"></div><div class="a" style="left:7px;top:361px;width:30px;height:1px;background:#D8D5EC;"></div><div class="a" style="left:7px;top:361px;width:1px;height:20px;background:#D8D5EC;"></div><div class="a" style="left:7px;top:380px;width:30px;height:1px;background:#000000;"></div><div class="a" style="left:36px;top:361px;width:1px;height:20px;background:#000000;"></div><div class="t" style="left:11px;top:365.84px;font-size:12px;line-height:12px;color:#000;font-weight:400;letter-spacing:0px;transform:scaleX(0.9);transform-origin:left;">12</div><div class="t" style="left:41px;top:361.84px;font-size:12px;line-height:12px;color:#000;font-weight:400;letter-spacing:-0.2px;transform:scaleX(0.9);transform-origin:left;">1012</div><div class="t" style="left:75px;top:361.84px;font-size:12px;line-height:12px;color:#000;font-weight:400;letter-spacing:-0.2px;transform:scaleX(0.9);transform-origin:left;">Szabó Kázmér</div><div class="a" style="left:37px;top:381px;width:371px;height:20px;background:#FFFFFF;"></div><div class="a" style="left:71px;top:381px;width:1px;height:20px;background:#E4E4E4;"></div><div class="a" style="left:182px;top:381px;width:1px;height:20px;background:#E4E4E4;"></div><div class="a" style="left:270px;top:381px;width:1px;height:20px;background:#E4E4E4;"></div><div class="a" style="left:319px;top:381px;width:1px;height:20px;background:#E4E4E4;"></div><div class="a" style="left:408px;top:381px;width:1px;height:20px;background:#E4E4E4;"></div><div class="a" style="left:7px;top:381px;width:30px;height:20px;background:#ADA8D9;"></div><div class="a" style="left:7px;top:381px;width:30px;height:1px;background:#D8D5EC;"></div><div class="a" style="left:7px;top:381px;width:1px;height:20px;background:#D8D5EC;"></div><div class="a" style="left:7px;top:400px;width:30px;height:1px;background:#000000;"></div><div class="a" style="left:36px;top:381px;width:1px;height:20px;background:#000000;"></div><div class="t" style="left:11px;top:385.84px;font-size:12px;line-height:12px;color:#000;font-weight:400;letter-spacing:0px;transform:scaleX(0.9);transform-origin:left;">13</div><div class="t" style="left:41px;top:381.84px;font-size:12px;line-height:12px;color:#000;font-weight:400;letter-spacing:-0.2px;transform:scaleX(0.9);transform-origin:left;">1013</div><div class="t" style="left:75px;top:381.84px;font-size:12px;line-height:12px;color:#000;font-weight:400;letter-spacing:-0.2px;transform:scaleX(0.9);transform-origin:left;">Nagy Pulyka Bt.</div><div class="a" style="left:37px;top:401px;width:371px;height:20px;background:#F0F0F0;"></div><div class="a" style="left:71px;top:401px;width:1px;height:20px;background:#E4E4E4;"></div><div class="a" style="left:182px;top:401px;width:1px;height:20px;background:#E4E4E4;"></div><div class="a" style="left:270px;top:401px;width:1px;height:20px;background:#E4E4E4;"></div><div class="a" style="left:319px;top:401px;width:1px;height:20px;background:#E4E4E4;"></div><div class="a" style="left:408px;top:401px;width:1px;height:20px;background:#E4E4E4;"></div><div class="a" style="left:7px;top:401px;width:30px;height:20px;background:#ADA8D9;"></div><div class="a" style="left:7px;top:401px;width:30px;height:1px;background:#D8D5EC;"></div><div class="a" style="left:7px;top:401px;width:1px;height:20px;background:#D8D5EC;"></div><div class="a" style="left:7px;top:420px;width:30px;height:1px;background:#000000;"></div><div class="a" style="left:36px;top:401px;width:1px;height:20px;background:#000000;"></div><div class="t" style="left:11px;top:405.84px;font-size:12px;line-height:12px;color:#000;font-weight:400;letter-spacing:0px;transform:scaleX(0.9);transform-origin:left;">14</div><div class="t" style="left:41px;top:401.84px;font-size:12px;line-height:12px;color:#000;font-weight:400;letter-spacing:-0.2px;transform:scaleX(0.9);transform-origin:left;">1014</div><div class="t" style="left:75px;top:401.84px;font-size:12px;line-height:12px;color:#000;font-weight:400;letter-spacing:-0.2px;transform:scaleX(0.9);transform-origin:left;">Kis Pál</div><div class="a" style="left:37px;top:421px;width:371px;height:20px;background:#FFFFFF;"></div><div class="a" style="left:71px;top:421px;width:1px;height:20px;background:#E4E4E4;"></div><div class="a" style="left:182px;top:421px;width:1px;height:20px;background:#E4E4E4;"></div><div class="a" style="left:270px;top:421px;width:1px;height:20px;background:#E4E4E4;"></div><div class="a" style="left:319px;top:421px;width:1px;height:20px;background:#E4E4E4;"></div><div class="a" style="left:408px;top:421px;width:1px;height:20px;background:#E4E4E4;"></div><div class="a" style="left:7px;top:421px;width:30px;height:20px;background:#ADA8D9;"></div><div class="a" style="left:7px;top:421px;width:30px;height:1px;background:#D8D5EC;"></div><div class="a" style="left:7px;top:421px;width:1px;height:20px;background:#D8D5EC;"></div><div class="a" style="left:7px;top:440px;width:30px;height:1px;background:#000000;"></div><div class="a" style="left:36px;top:421px;width:1px;height:20px;background:#000000;"></div><div class="t" style="left:11px;top:425.84px;font-size:12px;line-height:12px;color:#000;font-weight:400;letter-spacing:0px;transform:scaleX(0.9);transform-origin:left;">15</div><div class="t" style="left:41px;top:421.84px;font-size:12px;line-height:12px;color:#000;font-weight:400;letter-spacing:-0.2px;transform:scaleX(0.9);transform-origin:left;">1015</div><div class="t" style="left:75px;top:421.84px;font-size:12px;line-height:12px;color:#000;font-weight:400;letter-spacing:-0.2px;transform:scaleX(0.9);transform-origin:left;">Szász Róbert</div><div class="a" style="left:37px;top:441px;width:371px;height:16px;background:#F0F0F0;"></div><div class="a" style="left:71px;top:441px;width:1px;height:16px;background:#E4E4E4;"></div><div class="a" style="left:182px;top:441px;width:1px;height:16px;background:#E4E4E4;"></div><div class="a" style="left:270px;top:441px;width:1px;height:16px;background:#E4E4E4;"></div><div class="a" style="left:319px;top:441px;width:1px;height:16px;background:#E4E4E4;"></div><div class="a" style="left:408px;top:441px;width:1px;height:16px;background:#E4E4E4;"></div><div class="t" style="left:41px;top:441.84px;font-size:12px;line-height:12px;color:#000;font-weight:400;letter-spacing:-0.2px;transform:scaleX(0.9);transform-origin:left;">1016</div><div class="t" style="left:75px;top:441.84px;font-size:12px;line-height:12px;color:#000;font-weight:400;letter-spacing:-0.2px;transform:scaleX(0.9);transform-origin:left;">Kovács Élelmiszer</div><div class="a" style="left:7px;top:441px;width:30px;height:16px;background:#ADA8D9;"></div><div class="a" style="left:7px;top:441px;width:30px;height:1px;background:#D8D5EC;"></div><div class="a" style="left:7px;top:441px;width:1px;height:16px;background:#D8D5EC;"></div><div class="a" style="left:36px;top:441px;width:1px;height:16px;background:#000000;"></div><div class="t" style="left:11px;top:445.84px;font-size:12px;line-height:12px;color:#000;font-weight:400;letter-spacing:0px;transform:scaleX(0.9);transform-origin:left;">16</div><div class="a" style="left:7px;top:457px;width:482px;height:1px;background:#D8D5EC;"></div><div class="a" style="left:7px;top:458px;width:482px;height:5px;background:#ADA8D9;"></div><div class="a" style="left:7px;top:459px;width:482px;height:1px;background:#D8D5EC;"></div><div class="a" style="left:7px;top:463px;width:498px;height:1px;background:#000000;"></div><div class="a" style="left:489px;top:121px;width:15px;height:342px;background:#ADA8D9;"></div><div class="a" style="left:489px;top:121px;width:15px;height:15px;background:#ADA8D9;"></div><div class="a" style="left:489px;top:121px;width:15px;height:1px;background:#D8D5EC;"></div><div class="a" style="left:489px;top:121px;width:1px;height:15px;background:#D8D5EC;"></div><div class="a" style="left:489px;top:135px;width:15px;height:1px;background:#000000;"></div><div class="a" style="left:503px;top:121px;width:1px;height:15px;background:#000000;"></div><div class="a" style="left:490px;top:134px;width:13px;height:1px;background:#5A4EB1;"></div><div class="a" style="left:502px;top:122px;width:1px;height:13px;background:#5A4EB1;"></div><svg class="a" style="left:489px;top:121px" width="15" height="15" viewBox="0 0 15 15"><path d="M3.5 9.5 L7 6 L10.5 9.5Z" fill="#000"/></svg><div class="a" style="left:489px;top:136px;width:14px;height:1px;background:#D8D5EC;"></div><div class="a" style="left:503px;top:121px;width:1px;height:343px;background:#000000;"></div><div class="a" style="left:506px;top:119px;width:1px;height:346px;background:#5A4EB1;"></div><div class="a" style="left:507px;top:119px;width:1px;height:346px;background:#D8D5EC;"></div><div class="a" style="left:505px;top:119px;width:1px;height:346px;background:#D8D5EC;"></div><div class="a" style="left:502px;top:121px;width:1px;height:342px;background:#5A4EB1;"></div><div class="a" style="left:510px;top:119px;width:1px;height:346px;background:#5A4EB1;"></div><div class="a" style="left:511px;top:119px;width:1px;height:346px;background:#000000;"></div><div class="a" style="left:512px;top:141px;width:501px;height:316px;background:#ADA8D9;"></div><div class="a" style="left:512px;top:141px;width:501px;height:1px;background:#D8D5EC;"></div><div class="a" style="left:512px;top:141px;width:1px;height:315px;background:#D8D5EC;"></div><div class="a" style="left:1012px;top:141px;width:1px;height:316px;background:#000000;"></div><div class="a" style="left:1011px;top:142px;width:1px;height:314px;background:#5A4EB1;"></div><div class="a" style="left:512px;top:456px;width:501px;height:1px;background:#000000;"></div><div class="a" style="left:513px;top:455px;width:499px;height:1px;background:#5A4EB1;"></div><div class="a" style="left:508px;top:460px;width:505px;height:1px;background:#D8D5EC;"></div><div class="a" style="left:508px;top:464px;width:505px;height:1px;background:#000000;"></div><div class="a" style="left:624px;top:121px;width:85px;height:20px;background:#ADA8D9;"></div><div class="a" style="left:625px;top:121px;width:83px;height:1px;background:#D8D5EC;"></div><div class="a" style="left:624px;top:122px;width:1px;height:19px;background:#D8D5EC;"></div><div class="a" style="left:708px;top:122px;width:1px;height:19px;background:#000000;"></div><div class="a" style="left:707px;top:122px;width:1px;height:19px;background:#5A4EB1;"></div><div class="t" style="left:631px;top:123.84px;font-size:12px;line-height:12px;color:#000;font-weight:400;letter-spacing:-0.2px;transform:scaleX(0.9);transform-origin:left;">Csoportosítás</div><div class="a" style="left:709px;top:121px;width:88px;height:20px;background:#ADA8D9;"></div><div class="a" style="left:710px;top:121px;width:86px;height:1px;background:#D8D5EC;"></div><div class="a" style="left:709px;top:122px;width:1px;height:19px;background:#D8D5EC;"></div><div class="a" style="left:796px;top:122px;width:1px;height:19px;background:#000000;"></div><div class="a" style="left:795px;top:122px;width:1px;height:19px;background:#5A4EB1;"></div><div class="t" style="left:717px;top:123.84px;font-size:12px;line-height:12px;color:#000;font-weight:400;letter-spacing:-0.2px;transform:scaleX(0.9);transform-origin:left;">Kiemelt címek</div><div class="a" style="left:797px;top:121px;width:128px;height:20px;background:#ADA8D9;"></div><div class="a" style="left:798px;top:121px;width:126px;height:1px;background:#D8D5EC;"></div><div class="a" style="left:797px;top:122px;width:1px;height:19px;background:#D8D5EC;"></div><div class="a" style="left:924px;top:122px;width:1px;height:19px;background:#000000;"></div><div class="a" style="left:923px;top:122px;width:1px;height:19px;background:#5A4EB1;"></div><div class="t" style="left:805px;top:123.84px;font-size:12px;line-height:12px;color:#000;font-weight:400;letter-spacing:-0.2px;transform:scaleX(0.9);transform-origin:left;">Vállalatfüggő jellemzők</div><div class="a" style="left:925px;top:121px;width:65px;height:20px;background:#ADA8D9;"></div><div class="a" style="left:926px;top:121px;width:63px;height:1px;background:#D8D5EC;"></div><div class="a" style="left:925px;top:122px;width:1px;height:19px;background:#D8D5EC;"></div><div class="a" style="left:989px;top:122px;width:1px;height:19px;background:#000000;"></div><div class="a" style="left:988px;top:122px;width:1px;height:19px;background:#5A4EB1;"></div><div class="t" style="left:932px;top:123.84px;font-size:12px;line-height:12px;color:#000;font-weight:400;letter-spacing:-0.2px;transform:scaleX(0.9);transform-origin:left;">Azonosító</div><div class="a" style="left:512px;top:119px;width:113px;height:24px;background:#ADA8D9;"></div><div class="a" style="left:513px;top:119px;width:111px;height:1px;background:#D8D5EC;"></div><div class="a" style="left:512px;top:120px;width:1px;height:23px;background:#D8D5EC;"></div><div class="a" style="left:624px;top:120px;width:1px;height:22px;background:#000000;"></div><div class="a" style="left:623px;top:120px;width:1px;height:22px;background:#5A4EB1;"></div><div class="t" style="left:521px;top:123.84px;font-size:12px;line-height:12px;color:#000;font-weight:400;letter-spacing:-0.2px;transform:scaleX(0.9);transform-origin:left;">Általános jellemzők</div><div class="a" style="left:981px;top:119px;width:16px;height:23px;background:#ADA8D9;"></div><div class="a" style="left:981px;top:119px;width:16px;height:1px;background:#D8D5EC;"></div><div class="a" style="left:981px;top:119px;width:1px;height:23px;background:#D8D5EC;"></div><div class="a" style="left:981px;top:141px;width:16px;height:1px;background:#000000;"></div><div class="a" style="left:996px;top:119px;width:1px;height:23px;background:#000000;"></div><div class="a" style="left:982px;top:140px;width:14px;height:1px;background:#5A4EB1;"></div><div class="a" style="left:995px;top:120px;width:1px;height:21px;background:#5A4EB1;"></div><div class="a" style="left:997px;top:119px;width:16px;height:23px;background:#ADA8D9;"></div><div class="a" style="left:997px;top:119px;width:16px;height:1px;background:#D8D5EC;"></div><div class="a" style="left:997px;top:119px;width:1px;height:23px;background:#D8D5EC;"></div><div class="a" style="left:997px;top:141px;width:16px;height:1px;background:#000000;"></div><div class="a" style="left:1012px;top:119px;width:1px;height:23px;background:#000000;"></div><div class="a" style="left:998px;top:140px;width:14px;height:1px;background:#5A4EB1;"></div><div class="a" style="left:1011px;top:120px;width:1px;height:21px;background:#5A4EB1;"></div><svg class="a" style="left:981px;top:119px" width="16" height="23" viewBox="0 0 16 23"><path d="M9.5 7.5 L5.5 11.5 L9.5 15.5Z" fill="#8A84C0"/><path d="M10.5 8 L10.5 16" stroke="#E8E6F4" stroke-width="1"/></svg><svg class="a" style="left:997px;top:119px" width="16" height="23" viewBox="0 0 16 23"><path d="M6 7.5 L10 11.5 L6 15.5Z" fill="#000"/></svg><div class="t" style="left:524px;top:156.84px;font-size:12px;line-height:12px;color:#000;font-weight:400;letter-spacing:-0.2px;transform:scaleX(0.9);transform-origin:left;">Pénznem</div><div class="a" style="left:642px;top:153px;width:90px;height:20px;background:#FFFFFF;"></div><div class="a" style="left:642px;top:153px;width:90px;height:1px;background:#5A4EB1;"></div><div class="a" style="left:642px;top:153px;width:1px;height:20px;background:#5A4EB1;"></div><div class="a" style="left:643px;top:154px;width:88px;height:1px;background:#000000;"></div><div class="a" style="left:643px;top:154px;width:1px;height:18px;background:#000000;"></div><div class="a" style="left:643px;top:171px;width:88px;height:1px;background:#ADA8D9;"></div><div class="a" style="left:730px;top:154px;width:1px;height:18px;background:#ADA8D9;"></div><div class="a" style="left:642px;top:172px;width:90px;height:1px;background:#D8D5EC;"></div><div class="a" style="left:731px;top:153px;width:1px;height:20px;background:#D8D5EC;"></div><div class="t" style="left:646px;top:156.84px;font-size:12px;line-height:12px;color:#000;font-weight:400;letter-spacing:-0.2px;transform:scaleX(0.9);transform-origin:left;">HUF</div><div class="a" style="left:732px;top:153px;width:269px;height:20px;background:#FFFFFF;"></div><div class="a" style="left:732px;top:153px;width:269px;height:1px;background:#5A4EB1;"></div><div class="a" style="left:732px;top:153px;width:1px;height:20px;background:#5A4EB1;"></div><div class="a" style="left:733px;top:154px;width:267px;height:1px;background:#000000;"></div><div class="a" style="left:733px;top:154px;width:1px;height:18px;background:#000000;"></div><div class="a" style="left:733px;top:171px;width:267px;height:1px;background:#ADA8D9;"></div><div class="a" style="left:999px;top:154px;width:1px;height:18px;background:#ADA8D9;"></div><div class="a" style="left:732px;top:172px;width:269px;height:1px;background:#D8D5EC;"></div><div class="a" style="left:1000px;top:153px;width:1px;height:20px;background:#D8D5EC;"></div><div class="t" style="left:736px;top:156.84px;font-size:12px;line-height:12px;color:#000;font-weight:400;letter-spacing:-0.2px;transform:scaleX(0.9);transform-origin:left;">Magyar forint</div><div class="t" style="left:524px;top:173.84px;font-size:12px;line-height:12px;color:#000;font-weight:400;letter-spacing:-0.2px;transform:scaleX(0.9);transform-origin:left;">Érv.?</div><div class="a" style="left:702px;top:173px;width:13px;height:13px;background:#FFFFFF;"></div><div class="a" style="left:702px;top:173px;width:13px;height:1px;background:#5A4EB1;"></div><div class="a" style="left:702px;top:173px;width:1px;height:13px;background:#5A4EB1;"></div><div class="a" style="left:703px;top:174px;width:11px;height:1px;background:#000000;"></div><div class="a" style="left:703px;top:174px;width:1px;height:11px;background:#000000;"></div><div class="a" style="left:703px;top:184px;width:11px;height:1px;background:#ADA8D9;"></div><div class="a" style="left:713px;top:174px;width:1px;height:11px;background:#ADA8D9;"></div><div class="a" style="left:702px;top:185px;width:13px;height:1px;background:#D8D5EC;"></div><div class="a" style="left:714px;top:173px;width:1px;height:13px;background:#D8D5EC;"></div><svg class="a" style="left:702px;top:173px" width="13" height="13" shape-rendering="crispEdges" fill="#000"><rect x="9" y="3" width="1" height="1"/><rect x="8" y="4" width="1" height="1"/><rect x="9" y="4" width="1" height="1"/><rect x="3" y="5" width="1" height="1"/><rect x="7" y="5" width="1" height="1"/><rect x="8" y="5" width="1" height="1"/><rect x="9" y="5" width="1" height="1"/><rect x="3" y="6" width="1" height="1"/><rect x="4" y="6" width="1" height="1"/><rect x="6" y="6" width="1" height="1"/><rect x="7" y="6" width="1" height="1"/><rect x="8" y="6" width="1" height="1"/><rect x="3" y="7" width="1" height="1"/><rect x="4" y="7" width="1" height="1"/><rect x="5" y="7" width="1" height="1"/><rect x="6" y="7" width="1" height="1"/><rect x="7" y="7" width="1" height="1"/><rect x="4" y="8" width="1" height="1"/><rect x="5" y="8" width="1" height="1"/><rect x="6" y="8" width="1" height="1"/><rect x="5" y="9" width="1" height="1"/></svg><div class="t" style="left:776px;top:173.84px;font-size:12px;line-height:12px;color:#000;font-weight:400;letter-spacing:-0.2px;transform:scaleX(0.9);transform-origin:left;">Kiadáskor cédula?</div><div class="a" style="left:928px;top:173px;width:13px;height:13px;background:#FFFFFF;"></div><div class="a" style="left:928px;top:173px;width:13px;height:1px;background:#5A4EB1;"></div><div class="a" style="left:928px;top:173px;width:1px;height:13px;background:#5A4EB1;"></div><div class="a" style="left:929px;top:174px;width:11px;height:1px;background:#000000;"></div><div class="a" style="left:929px;top:174px;width:1px;height:11px;background:#000000;"></div><div class="a" style="left:929px;top:184px;width:11px;height:1px;background:#ADA8D9;"></div><div class="a" style="left:939px;top:174px;width:1px;height:11px;background:#ADA8D9;"></div><div class="a" style="left:928px;top:185px;width:13px;height:1px;background:#D8D5EC;"></div><div class="a" style="left:940px;top:173px;width:1px;height:13px;background:#D8D5EC;"></div><div class="t" style="left:524px;top:190.84px;font-size:12px;line-height:12px;color:#000;font-weight:400;letter-spacing:-0.2px;transform:scaleX(0.9);transform-origin:left;">Adószám</div><div class="a" style="left:642px;top:187px;width:132px;height:20px;background:#FFFFFF;"></div><div class="a" style="left:642px;top:187px;width:132px;height:1px;background:#5A4EB1;"></div><div class="a" style="left:642px;top:187px;width:1px;height:20px;background:#5A4EB1;"></div><div class="a" style="left:643px;top:188px;width:130px;height:1px;background:#000000;"></div><div class="a" style="left:643px;top:188px;width:1px;height:18px;background:#000000;"></div><div class="a" style="left:643px;top:205px;width:130px;height:1px;background:#ADA8D9;"></div><div class="a" style="left:772px;top:188px;width:1px;height:18px;background:#ADA8D9;"></div><div class="a" style="left:642px;top:206px;width:132px;height:1px;background:#D8D5EC;"></div><div class="a" style="left:773px;top:187px;width:1px;height:20px;background:#D8D5EC;"></div><div class="t" style="left:776px;top:190.84px;font-size:12px;line-height:12px;color:#000;font-weight:400;letter-spacing:-0.2px;transform:scaleX(0.9);transform-origin:left;">Közösségi adószám</div><div class="a" style="left:868px;top:187px;width:133px;height:20px;background:#FFFFFF;"></div><div class="a" style="left:868px;top:187px;width:133px;height:1px;background:#5A4EB1;"></div><div class="a" style="left:868px;top:187px;width:1px;height:20px;background:#5A4EB1;"></div><div class="a" style="left:869px;top:188px;width:131px;height:1px;background:#000000;"></div><div class="a" style="left:869px;top:188px;width:1px;height:18px;background:#000000;"></div><div class="a" style="left:869px;top:205px;width:131px;height:1px;background:#ADA8D9;"></div><div class="a" style="left:999px;top:188px;width:1px;height:18px;background:#ADA8D9;"></div><div class="a" style="left:868px;top:206px;width:133px;height:1px;background:#D8D5EC;"></div><div class="a" style="left:1000px;top:187px;width:1px;height:20px;background:#D8D5EC;"></div><div class="t" style="left:524px;top:210.84px;font-size:12px;line-height:12px;color:#000;font-weight:400;letter-spacing:-0.2px;transform:scaleX(0.9);transform-origin:left;">Partner típus</div><div class="a" style="left:642px;top:207px;width:144px;height:20px;background:#FFFFFF;"></div><div class="a" style="left:642px;top:207px;width:144px;height:1px;background:#5A4EB1;"></div><div class="a" style="left:642px;top:207px;width:1px;height:20px;background:#5A4EB1;"></div><div class="a" style="left:643px;top:208px;width:142px;height:1px;background:#000000;"></div><div class="a" style="left:643px;top:208px;width:1px;height:18px;background:#000000;"></div><div class="a" style="left:643px;top:225px;width:142px;height:1px;background:#ADA8D9;"></div><div class="a" style="left:784px;top:208px;width:1px;height:18px;background:#ADA8D9;"></div><div class="a" style="left:642px;top:226px;width:144px;height:1px;background:#D8D5EC;"></div><div class="a" style="left:785px;top:207px;width:1px;height:20px;background:#D8D5EC;"></div><div class="a" style="left:786px;top:207px;width:215px;height:20px;background:#FFFFFF;"></div><div class="a" style="left:786px;top:207px;width:215px;height:1px;background:#5A4EB1;"></div><div class="a" style="left:786px;top:207px;width:1px;height:20px;background:#5A4EB1;"></div><div class="a" style="left:787px;top:208px;width:213px;height:1px;background:#000000;"></div><div class="a" style="left:787px;top:208px;width:1px;height:18px;background:#000000;"></div><div class="a" style="left:787px;top:225px;width:213px;height:1px;background:#ADA8D9;"></div><div class="a" style="left:999px;top:208px;width:1px;height:18px;background:#ADA8D9;"></div><div class="a" style="left:786px;top:226px;width:215px;height:1px;background:#D8D5EC;"></div><div class="a" style="left:1000px;top:207px;width:1px;height:20px;background:#D8D5EC;"></div><div class="t" style="left:524px;top:230.84px;font-size:12px;line-height:12px;color:#000;font-weight:400;letter-spacing:-0.2px;transform:scaleX(0.9);transform-origin:left;">Kimenő számla nyelv</div><div class="a" style="left:642px;top:227px;width:144px;height:20px;background:#FFFFFF;"></div><div class="a" style="left:642px;top:227px;width:144px;height:1px;background:#5A4EB1;"></div><div class="a" style="left:642px;top:227px;width:1px;height:20px;background:#5A4EB1;"></div><div class="a" style="left:643px;top:228px;width:142px;height:1px;background:#000000;"></div><div class="a" style="left:643px;top:228px;width:1px;height:18px;background:#000000;"></div><div class="a" style="left:643px;top:245px;width:142px;height:1px;background:#ADA8D9;"></div><div class="a" style="left:784px;top:228px;width:1px;height:18px;background:#ADA8D9;"></div><div class="a" style="left:642px;top:246px;width:144px;height:1px;background:#D8D5EC;"></div><div class="a" style="left:785px;top:227px;width:1px;height:20px;background:#D8D5EC;"></div><div class="a" style="left:786px;top:227px;width:215px;height:20px;background:#FFFFFF;"></div><div class="a" style="left:786px;top:227px;width:215px;height:1px;background:#5A4EB1;"></div><div class="a" style="left:786px;top:227px;width:1px;height:20px;background:#5A4EB1;"></div><div class="a" style="left:787px;top:228px;width:213px;height:1px;background:#000000;"></div><div class="a" style="left:787px;top:228px;width:1px;height:18px;background:#000000;"></div><div class="a" style="left:787px;top:245px;width:213px;height:1px;background:#ADA8D9;"></div><div class="a" style="left:999px;top:228px;width:1px;height:18px;background:#ADA8D9;"></div><div class="a" style="left:786px;top:246px;width:215px;height:1px;background:#D8D5EC;"></div><div class="a" style="left:1000px;top:227px;width:1px;height:20px;background:#D8D5EC;"></div><div class="t" style="left:524px;top:250.84px;font-size:12px;line-height:12px;color:#000;font-weight:400;letter-spacing:-0.2px;transform:scaleX(0.9);transform-origin:left;">Cikk nyomtatás rendezés</div><div class="a" style="left:642px;top:247px;width:359px;height:20px;background:#FFFFFF;"></div><div class="a" style="left:642px;top:247px;width:359px;height:1px;background:#5A4EB1;"></div><div class="a" style="left:642px;top:247px;width:1px;height:20px;background:#5A4EB1;"></div><div class="a" style="left:643px;top:248px;width:357px;height:1px;background:#000000;"></div><div class="a" style="left:643px;top:248px;width:1px;height:18px;background:#000000;"></div><div class="a" style="left:643px;top:265px;width:357px;height:1px;background:#ADA8D9;"></div><div class="a" style="left:999px;top:248px;width:1px;height:18px;background:#ADA8D9;"></div><div class="a" style="left:642px;top:266px;width:359px;height:1px;background:#D8D5EC;"></div><div class="a" style="left:1000px;top:247px;width:1px;height:20px;background:#D8D5EC;"></div><div class="a" style="left:983px;top:249px;width:16px;height:16px;background:#ADA8D9;"></div><div class="a" style="left:983px;top:249px;width:16px;height:1px;background:#D8D5EC;"></div><div class="a" style="left:983px;top:249px;width:1px;height:16px;background:#D8D5EC;"></div><div class="a" style="left:983px;top:264px;width:16px;height:1px;background:#000000;"></div><div class="a" style="left:998px;top:249px;width:1px;height:16px;background:#000000;"></div><div class="a" style="left:984px;top:263px;width:14px;height:1px;background:#5A4EB1;"></div><div class="a" style="left:997px;top:250px;width:1px;height:14px;background:#5A4EB1;"></div><svg class="a" style="left:983px;top:249px" width="16" height="16" viewBox="0 0 16 16"><path d="M4.5 6.5 L11.5 6.5 L8 10Z" fill="#000"/></svg><div class="a" style="left:642px;top:267px;width:359px;height:132px;background:#FFFFFF;"></div><div class="a" style="left:642px;top:267px;width:359px;height:1px;background:#5A4EB1;"></div><div class="a" style="left:642px;top:267px;width:1px;height:132px;background:#5A4EB1;"></div><div class="a" style="left:643px;top:268px;width:357px;height:1px;background:#000000;"></div><div class="a" style="left:643px;top:268px;width:1px;height:130px;background:#000000;"></div><div class="a" style="left:643px;top:397px;width:357px;height:1px;background:#ADA8D9;"></div><div class="a" style="left:999px;top:268px;width:1px;height:130px;background:#ADA8D9;"></div><div class="a" style="left:642px;top:398px;width:359px;height:1px;background:#D8D5EC;"></div><div class="a" style="left:1000px;top:267px;width:1px;height:132px;background:#D8D5EC;"></div><div class="a" style="left:642px;top:399px;width:359px;height:20px;background:#FFFFFF;"></div><div class="a" style="left:642px;top:399px;width:359px;height:1px;background:#5A4EB1;"></div><div class="a" style="left:642px;top:399px;width:1px;height:20px;background:#5A4EB1;"></div><div class="a" style="left:643px;top:400px;width:357px;height:1px;background:#000000;"></div><div class="a" style="left:643px;top:400px;width:1px;height:18px;background:#000000;"></div><div class="a" style="left:643px;top:417px;width:357px;height:1px;background:#ADA8D9;"></div><div class="a" style="left:999px;top:400px;width:1px;height:18px;background:#ADA8D9;"></div><div class="a" style="left:642px;top:418px;width:359px;height:1px;background:#D8D5EC;"></div><div class="a" style="left:1000px;top:399px;width:1px;height:20px;background:#D8D5EC;"></div><div class="a" style="left:780px;top:420px;width:115px;height:24px;background:#ADA8D9;"></div><div class="a" style="left:780px;top:420px;width:115px;height:1px;background:#D8D5EC;"></div><div class="a" style="left:780px;top:420px;width:1px;height:24px;background:#D8D5EC;"></div><div class="a" style="left:780px;top:443px;width:115px;height:1px;background:#000000;"></div><div class="a" style="left:894px;top:420px;width:1px;height:24px;background:#000000;"></div><div class="a" style="left:781px;top:442px;width:113px;height:1px;background:#5A4EB1;"></div><div class="a" style="left:893px;top:421px;width:1px;height:22px;background:#5A4EB1;"></div><div class="t" style="left:860px;top:425.84px;font-size:12px;line-height:12px;color:#000;font-weight:400;letter-spacing:-0.2px;transform:scaleX(0.9);transform-origin:left;">e</div><div class="t" style="left:6px;top:465.84px;font-size:12px;line-height:12px;color:#000;font-weight:400;letter-spacing:-0.2px;transform:scaleX(0.9);transform-origin:left;">Szállítási címek</div><div class="a" style="left:5px;top:477px;width:75px;height:1px;background:#000;"></div><div class="a" style="left:5px;top:479px;width:500px;height:256px;background:#FFFFFF;"></div><div class="a" style="left:5px;top:479px;width:500px;height:1px;background:#5A4EB1;"></div><div class="a" style="left:5px;top:479px;width:1px;height:256px;background:#5A4EB1;"></div><div class="a" style="left:6px;top:480px;width:498px;height:1px;background:#000000;"></div><div class="a" style="left:6px;top:480px;width:1px;height:254px;background:#000000;"></div><div class="a" style="left:5px;top:734px;width:500px;height:1px;background:#D8D5EC;"></div><div class="a" style="left:504px;top:479px;width:1px;height:256px;background:#D8D5EC;"></div><div class="a" style="left:7px;top:481px;width:496px;height:20px;background:#ADA8D9;"></div><div class="a" style="left:37px;top:481px;width:34px;height:20px;background:#ADA8D9;"></div><div class="a" style="left:37px;top:481px;width:34px;height:1px;background:#D8D5EC;"></div><div class="a" style="left:37px;top:481px;width:1px;height:20px;background:#D8D5EC;"></div><div class="a" style="left:37px;top:500px;width:34px;height:1px;background:#000000;"></div><div class="a" style="left:70px;top:481px;width:1px;height:20px;background:#000000;"></div><div class="t" style="left:41px;top:484.84px;font-size:12px;line-height:12px;color:#000;font-weight:400;letter-spacing:-0.2px;transform:scaleX(0.9);transform-origin:left;">Kód</div><div class="a" style="left:71px;top:481px;width:76px;height:20px;background:#ADA8D9;"></div><div class="a" style="left:71px;top:481px;width:76px;height:1px;background:#D8D5EC;"></div><div class="a" style="left:71px;top:481px;width:1px;height:20px;background:#D8D5EC;"></div><div class="a" style="left:71px;top:500px;width:76px;height:1px;background:#000000;"></div><div class="a" style="left:146px;top:481px;width:1px;height:20px;background:#000000;"></div><div class="t" style="left:75px;top:484.84px;font-size:12px;line-height:12px;color:#000;font-weight:400;letter-spacing:-0.2px;transform:scaleX(0.9);transform-origin:left;">Név</div><div class="a" style="left:147px;top:481px;width:41px;height:20px;background:#ADA8D9;"></div><div class="a" style="left:147px;top:481px;width:41px;height:1px;background:#D8D5EC;"></div><div class="a" style="left:147px;top:481px;width:1px;height:20px;background:#D8D5EC;"></div><div class="a" style="left:147px;top:500px;width:41px;height:1px;background:#000000;"></div><div class="a" style="left:187px;top:481px;width:1px;height:20px;background:#000000;"></div><div class="t" style="left:151px;top:484.84px;font-size:12px;line-height:12px;color:#000;font-weight:400;letter-spacing:-0.2px;transform:scaleX(0.9);transform-origin:left;">Érv.?</div><div class="a" style="left:188px;top:481px;width:62px;height:20px;background:#ADA8D9;"></div><div class="a" style="left:188px;top:481px;width:62px;height:1px;background:#D8D5EC;"></div><div class="a" style="left:188px;top:481px;width:1px;height:20px;background:#D8D5EC;"></div><div class="a" style="left:188px;top:500px;width:62px;height:1px;background:#000000;"></div><div class="a" style="left:249px;top:481px;width:1px;height:20px;background:#000000;"></div><div class="t" style="left:192px;top:484.84px;font-size:12px;line-height:12px;color:#000;font-weight:400;letter-spacing:-0.2px;transform:scaleX(0.9);transform-origin:left;">Település</div><div class="a" style="left:250px;top:481px;width:49px;height:20px;background:#ADA8D9;"></div><div class="a" style="left:250px;top:481px;width:49px;height:1px;background:#D8D5EC;"></div><div class="a" style="left:250px;top:481px;width:1px;height:20px;background:#D8D5EC;"></div><div class="a" style="left:250px;top:500px;width:49px;height:1px;background:#000000;"></div><div class="a" style="left:298px;top:481px;width:1px;height:20px;background:#000000;"></div><div class="t" style="left:254px;top:484.84px;font-size:12px;line-height:12px;color:#000;font-weight:400;letter-spacing:-0.2px;transform:scaleX(0.9);transform-origin:left;">Ir.szám</div><div class="a" style="left:299px;top:481px;width:71px;height:20px;background:#ADA8D9;"></div><div class="a" style="left:299px;top:481px;width:71px;height:1px;background:#D8D5EC;"></div><div class="a" style="left:299px;top:481px;width:1px;height:20px;background:#D8D5EC;"></div><div class="a" style="left:299px;top:500px;width:71px;height:1px;background:#000000;"></div><div class="a" style="left:369px;top:481px;width:1px;height:20px;background:#000000;"></div><div class="t" style="left:303px;top:484.84px;font-size:12px;line-height:12px;color:#000;font-weight:400;letter-spacing:-0.2px;transform:scaleX(0.9);transform-origin:left;">Ország kód</div><div class="a" style="left:370px;top:481px;width:76px;height:20px;background:#ADA8D9;"></div><div class="a" style="left:370px;top:481px;width:76px;height:1px;background:#D8D5EC;"></div><div class="a" style="left:370px;top:481px;width:1px;height:20px;background:#D8D5EC;"></div><div class="a" style="left:370px;top:500px;width:76px;height:1px;background:#000000;"></div><div class="a" style="left:445px;top:481px;width:1px;height:20px;background:#000000;"></div><div class="t" style="left:374px;top:484.84px;font-size:12px;line-height:12px;color:#000;font-weight:400;letter-spacing:-0.2px;transform:scaleX(0.9);transform-origin:left;">Ország név</div><div class="a" style="left:446px;top:481px;width:51px;height:20px;background:#ADA8D9;"></div><div class="a" style="left:446px;top:481px;width:51px;height:1px;background:#D8D5EC;"></div><div class="a" style="left:446px;top:481px;width:1px;height:20px;background:#D8D5EC;"></div><div class="a" style="left:446px;top:500px;width:51px;height:1px;background:#000000;"></div><div class="a" style="left:496px;top:481px;width:1px;height:20px;background:#000000;"></div><div class="t" style="left:450px;top:484.84px;font-size:12px;line-height:12px;color:#000;font-weight:400;letter-spacing:-0.2px;transform:scaleX(0.9);transform-origin:left;">Cím</div><div class="a" style="left:497px;top:481px;width:7px;height:20px;background:#ADA8D9;"></div><div class="a" style="left:497px;top:481px;width:7px;height:1px;background:#D8D5EC;"></div><div class="a" style="left:497px;top:481px;width:1px;height:20px;background:#D8D5EC;"></div><div class="a" style="left:497px;top:500px;width:7px;height:1px;background:#000000;"></div><div class="t" style="left:501px;top:484.84px;font-size:12px;line-height:12px;color:#000;font-weight:400;letter-spacing:-0.2px;transform:scaleX(0.9);transform-origin:left;">I</div><div class="a" style="left:37px;top:501px;width:466px;height:20px;background:#ADA8D9;"></div><div class="a" style="left:71px;top:501px;width:1px;height:20px;background:#D4D0EC;"></div><div class="a" style="left:147px;top:501px;width:1px;height:20px;background:#D4D0EC;"></div><div class="a" style="left:188px;top:501px;width:1px;height:20px;background:#D4D0EC;"></div><div class="a" style="left:250px;top:501px;width:1px;height:20px;background:#D4D0EC;"></div><div class="a" style="left:299px;top:501px;width:1px;height:20px;background:#D4D0EC;"></div><div class="a" style="left:370px;top:501px;width:1px;height:20px;background:#D4D0EC;"></div><div class="a" style="left:446px;top:501px;width:1px;height:20px;background:#D4D0EC;"></div><div class="a" style="left:497px;top:501px;width:1px;height:20px;background:#D4D0EC;"></div><div class="a" style="left:7px;top:501px;width:30px;height:20px;background:#ADA8D9;"></div><div class="a" style="left:7px;top:501px;width:30px;height:1px;background:#000000;"></div><div class="a" style="left:7px;top:501px;width:2px;height:20px;background:#000000;"></div><div class="a" style="left:7px;top:520px;width:30px;height:1px;background:#D8D5EC;"></div><div class="a" style="left:36px;top:501px;width:1px;height:20px;background:#D8D5EC;"></div><div class="t" style="left:11px;top:505.84px;font-size:12px;line-height:12px;color:#000;font-weight:700;letter-spacing:0px;transform:scaleX(0.9);transform-origin:left;">1</div><div class="t" style="left:41px;top:500.84px;font-size:12px;line-height:12px;color:#000;font-weight:400;letter-spacing:-0.2px;transform:scaleX(0.9);transform-origin:left;">1007</div><div class="t" style="left:75px;top:500.84px;font-size:12px;line-height:12px;color:#000;font-weight:400;letter-spacing:-0.2px;transform:scaleX(0.9);transform-origin:left;">Nagy Hús Kft.</div><div class="t" style="left:192px;top:500.84px;font-size:12px;line-height:12px;color:#000;font-weight:400;letter-spacing:-0.2px;transform:scaleX(0.9);transform-origin:left;">Algyő</div><div class="t" style="left:254px;top:500.84px;font-size:12px;line-height:12px;color:#000;font-weight:400;letter-spacing:-0.2px;transform:scaleX(0.9);transform-origin:left;">6750</div><div class="t" style="left:303px;top:500.84px;font-size:12px;line-height:12px;color:#000;font-weight:400;letter-spacing:-0.2px;transform:scaleX(0.9);transform-origin:left;">H</div><div class="t" style="left:374px;top:500.84px;font-size:12px;line-height:12px;color:#000;font-weight:400;letter-spacing:-0.2px;transform:scaleX(0.9);transform-origin:left;">Magyarország</div><div class="t" style="left:450px;top:500.84px;font-size:12px;line-height:12px;color:#000;font-weight:400;letter-spacing:-0.2px;transform:scaleX(0.9);transform-origin:left;">Fő út 13.</div><div class="a" style="left:162px;top:505px;width:13px;height:13px;background:#FFFFFF;"></div><div class="a" style="left:162px;top:505px;width:13px;height:1px;background:#5A4EB1;"></div><div class="a" style="left:162px;top:505px;width:1px;height:13px;background:#5A4EB1;"></div><div class="a" style="left:163px;top:506px;width:11px;height:1px;background:#000000;"></div><div class="a" style="left:163px;top:506px;width:1px;height:11px;background:#000000;"></div><div class="a" style="left:163px;top:516px;width:11px;height:1px;background:#ADA8D9;"></div><div class="a" style="left:173px;top:506px;width:1px;height:11px;background:#ADA8D9;"></div><div class="a" style="left:162px;top:517px;width:13px;height:1px;background:#D8D5EC;"></div><div class="a" style="left:174px;top:505px;width:1px;height:13px;background:#D8D5EC;"></div><svg class="a" style="left:162px;top:505px" width="13" height="13" shape-rendering="crispEdges" fill="#000"><rect x="9" y="3" width="1" height="1"/><rect x="8" y="4" width="1" height="1"/><rect x="9" y="4" width="1" height="1"/><rect x="3" y="5" width="1" height="1"/><rect x="7" y="5" width="1" height="1"/><rect x="8" y="5" width="1" height="1"/><rect x="9" y="5" width="1" height="1"/><rect x="3" y="6" width="1" height="1"/><rect x="4" y="6" width="1" height="1"/><rect x="6" y="6" width="1" height="1"/><rect x="7" y="6" width="1" height="1"/><rect x="8" y="6" width="1" height="1"/><rect x="3" y="7" width="1" height="1"/><rect x="4" y="7" width="1" height="1"/><rect x="5" y="7" width="1" height="1"/><rect x="6" y="7" width="1" height="1"/><rect x="7" y="7" width="1" height="1"/><rect x="4" y="8" width="1" height="1"/><rect x="5" y="8" width="1" height="1"/><rect x="6" y="8" width="1" height="1"/><rect x="5" y="9" width="1" height="1"/></svg><div class="a" style="left:7px;top:521px;width:30px;height:198px;background:#ADA8D9;"></div><div class="a" style="left:7px;top:719px;width:497px;height:15px;background:#ADA8D9;"></div><div class="a" style="left:7px;top:719px;width:15px;height:15px;background:#ADA8D9;"></div><div class="a" style="left:7px;top:719px;width:15px;height:1px;background:#D8D5EC;"></div><div class="a" style="left:7px;top:719px;width:1px;height:15px;background:#D8D5EC;"></div><div class="a" style="left:7px;top:733px;width:15px;height:1px;background:#000000;"></div><div class="a" style="left:21px;top:719px;width:1px;height:15px;background:#000000;"></div><div class="a" style="left:8px;top:732px;width:13px;height:1px;background:#5A4EB1;"></div><div class="a" style="left:20px;top:720px;width:1px;height:13px;background:#5A4EB1;"></div><svg class="a" style="left:7px;top:719px" width="15" height="15" viewBox="0 0 15 15"><path d="M9 4 L5 7.5 L9 11Z" fill="#000"/></svg><div class="a" style="left:22px;top:719px;width:409px;height:15px;background:#ADA8D9;"></div><div class="a" style="left:22px;top:719px;width:409px;height:1px;background:#D8D5EC;"></div><div class="a" style="left:22px;top:719px;width:1px;height:15px;background:#D8D5EC;"></div><div class="a" style="left:22px;top:733px;width:409px;height:1px;background:#000000;"></div><div class="a" style="left:430px;top:719px;width:1px;height:15px;background:#000000;"></div><div class="a" style="left:23px;top:732px;width:407px;height:1px;background:#5A4EB1;"></div><div class="a" style="left:429px;top:720px;width:1px;height:13px;background:#5A4EB1;"></div><div class="a" style="left:431px;top:719px;width:58px;height:14px;background-image:repeating-conic-gradient(#D8D5EC 0% 25%, #ADA8D9 0% 50%);background-size:2px 2px"></div><div class="a" style="left:431px;top:733px;width:58px;height:1px;background:#000000;"></div><div class="a" style="left:489px;top:719px;width:15px;height:15px;background:#ADA8D9;"></div><div class="a" style="left:489px;top:719px;width:15px;height:1px;background:#D8D5EC;"></div><div class="a" style="left:489px;top:719px;width:1px;height:15px;background:#D8D5EC;"></div><div class="a" style="left:489px;top:733px;width:15px;height:1px;background:#000000;"></div><div class="a" style="left:503px;top:719px;width:1px;height:15px;background:#000000;"></div><div class="a" style="left:490px;top:732px;width:13px;height:1px;background:#5A4EB1;"></div><div class="a" style="left:502px;top:720px;width:1px;height:13px;background:#5A4EB1;"></div><svg class="a" style="left:489px;top:719px" width="15" height="15" viewBox="0 0 15 15"><path d="M6 4 L10 7.5 L6 11Z" fill="#000"/></svg><div class="a" style="left:506px;top:479px;width:1px;height:256px;background:#5A4EB1;"></div><div class="a" style="left:507px;top:479px;width:1px;height:256px;background:#D8D5EC;"></div><div class="a" style="left:505px;top:479px;width:1px;height:256px;background:#D8D5EC;"></div><div class="a" style="left:504px;top:481px;width:1px;height:252px;background:#C4BEEC;"></div><div class="a" style="left:510px;top:479px;width:1px;height:256px;background:#5A4EB1;"></div><div class="a" style="left:511px;top:479px;width:1px;height:256px;background:#000000;"></div><div class="a" style="left:5px;top:464px;width:500px;height:1px;background:#D8D5EC;"></div><div class="a" style="left:512px;top:501px;width:501px;height:233px;background:#ADA8D9;"></div><div class="a" style="left:512px;top:501px;width:501px;height:1px;background:#D8D5EC;"></div><div class="a" style="left:512px;top:501px;width:1px;height:232px;background:#D8D5EC;"></div><div class="a" style="left:1012px;top:501px;width:1px;height:233px;background:#000000;"></div><div class="a" style="left:1011px;top:502px;width:1px;height:231px;background:#5A4EB1;"></div><div class="a" style="left:512px;top:733px;width:501px;height:1px;background:#000000;"></div><div class="a" style="left:513px;top:732px;width:499px;height:1px;background:#5A4EB1;"></div><div class="a" style="left:663px;top:481px;width:87px;height:20px;background:#ADA8D9;"></div><div class="a" style="left:664px;top:481px;width:85px;height:1px;background:#D8D5EC;"></div><div class="a" style="left:663px;top:482px;width:1px;height:19px;background:#D8D5EC;"></div><div class="a" style="left:749px;top:482px;width:1px;height:19px;background:#000000;"></div><div class="a" style="left:748px;top:482px;width:1px;height:19px;background:#5A4EB1;"></div><div class="t" style="left:670px;top:483.84px;font-size:12px;line-height:12px;color:#000;font-weight:400;letter-spacing:-0.2px;transform:scaleX(0.9);transform-origin:left;">Kereskedelem</div><div class="a" style="left:750px;top:481px;width:121px;height:20px;background:#ADA8D9;"></div><div class="a" style="left:751px;top:481px;width:119px;height:1px;background:#D8D5EC;"></div><div class="a" style="left:750px;top:482px;width:1px;height:19px;background:#D8D5EC;"></div><div class="a" style="left:870px;top:482px;width:1px;height:19px;background:#000000;"></div><div class="a" style="left:869px;top:482px;width:1px;height:19px;background:#5A4EB1;"></div><div class="t" style="left:758px;top:483.84px;font-size:12px;line-height:12px;color:#000;font-weight:400;letter-spacing:-0.2px;transform:scaleX(0.9);transform-origin:left;">Készültségek, járatok</div><div class="a" style="left:871px;top:481px;width:68px;height:20px;background:#ADA8D9;"></div><div class="a" style="left:872px;top:481px;width:66px;height:1px;background:#D8D5EC;"></div><div class="a" style="left:871px;top:482px;width:1px;height:19px;background:#D8D5EC;"></div><div class="a" style="left:938px;top:482px;width:1px;height:19px;background:#000000;"></div><div class="a" style="left:937px;top:482px;width:1px;height:19px;background:#5A4EB1;"></div><div class="t" style="left:880px;top:483.84px;font-size:12px;line-height:12px;color:#000;font-weight:400;letter-spacing:-0.2px;transform:scaleX(0.9);transform-origin:left;">Besorolás</div><div class="a" style="left:939px;top:481px;width:51px;height:20px;background:#ADA8D9;"></div><div class="a" style="left:940px;top:481px;width:49px;height:1px;background:#D8D5EC;"></div><div class="a" style="left:939px;top:482px;width:1px;height:19px;background:#D8D5EC;"></div><div class="a" style="left:989px;top:482px;width:1px;height:19px;background:#000000;"></div><div class="a" style="left:988px;top:482px;width:1px;height:19px;background:#5A4EB1;"></div><div class="t" style="left:947px;top:483.84px;font-size:12px;line-height:12px;color:#000;font-weight:400;letter-spacing:-0.2px;transform:scaleX(0.9);transform-origin:left;">Főkönyv</div><div class="a" style="left:512px;top:479px;width:152px;height:24px;background:#ADA8D9;"></div><div class="a" style="left:513px;top:479px;width:150px;height:1px;background:#D8D5EC;"></div><div class="a" style="left:512px;top:480px;width:1px;height:23px;background:#D8D5EC;"></div><div class="a" style="left:663px;top:480px;width:1px;height:22px;background:#000000;"></div><div class="a" style="left:662px;top:480px;width:1px;height:22px;background:#5A4EB1;"></div><div class="t" style="left:522px;top:483.84px;font-size:12px;line-height:12px;color:#000;font-weight:400;letter-spacing:-0.2px;transform:scaleX(0.9);transform-origin:left;">Cím vállalatfüggő jellemzők</div><div class="a" style="left:981px;top:480px;width:16px;height:22px;background:#ADA8D9;"></div><div class="a" style="left:981px;top:480px;width:16px;height:1px;background:#D8D5EC;"></div><div class="a" style="left:981px;top:480px;width:1px;height:22px;background:#D8D5EC;"></div><div class="a" style="left:981px;top:501px;width:16px;height:1px;background:#000000;"></div><div class="a" style="left:996px;top:480px;width:1px;height:22px;background:#000000;"></div><div class="a" style="left:982px;top:500px;width:14px;height:1px;background:#5A4EB1;"></div><div class="a" style="left:995px;top:481px;width:1px;height:20px;background:#5A4EB1;"></div><div class="a" style="left:997px;top:480px;width:16px;height:22px;background:#ADA8D9;"></div><div class="a" style="left:997px;top:480px;width:16px;height:1px;background:#D8D5EC;"></div><div class="a" style="left:997px;top:480px;width:1px;height:22px;background:#D8D5EC;"></div><div class="a" style="left:997px;top:501px;width:16px;height:1px;background:#000000;"></div><div class="a" style="left:1012px;top:480px;width:1px;height:22px;background:#000000;"></div><div class="a" style="left:998px;top:500px;width:14px;height:1px;background:#5A4EB1;"></div><div class="a" style="left:1011px;top:481px;width:1px;height:20px;background:#5A4EB1;"></div><svg class="a" style="left:981px;top:480px" width="16" height="22" viewBox="0 0 16 22"><path d="M9.5 7 L5.5 11 L9.5 15Z" fill="#8A84C0"/><path d="M10.5 7.5 L10.5 15.5" stroke="#E8E6F4" stroke-width="1"/></svg><svg class="a" style="left:997px;top:480px" width="16" height="22" viewBox="0 0 16 22"><path d="M6 7 L10 11 L6 15Z" fill="#000"/></svg><div class="t" style="left:524px;top:517.84px;font-size:12px;line-height:12px;color:#000;font-weight:400;letter-spacing:-0.2px;transform:scaleX(0.9);transform-origin:left;">Paritás</div><div class="a" style="left:632px;top:514px;width:148px;height:20px;background:#FFFFFF;"></div><div class="a" style="left:632px;top:514px;width:148px;height:1px;background:#5A4EB1;"></div><div class="a" style="left:632px;top:514px;width:1px;height:20px;background:#5A4EB1;"></div><div class="a" style="left:633px;top:515px;width:146px;height:1px;background:#000000;"></div><div class="a" style="left:633px;top:515px;width:1px;height:18px;background:#000000;"></div><div class="a" style="left:633px;top:532px;width:146px;height:1px;background:#ADA8D9;"></div><div class="a" style="left:778px;top:515px;width:1px;height:18px;background:#ADA8D9;"></div><div class="a" style="left:632px;top:533px;width:148px;height:1px;background:#D8D5EC;"></div><div class="a" style="left:779px;top:514px;width:1px;height:20px;background:#D8D5EC;"></div><div class="a" style="left:780px;top:514px;width:221px;height:20px;background:#FFFFFF;"></div><div class="a" style="left:780px;top:514px;width:221px;height:1px;background:#5A4EB1;"></div><div class="a" style="left:780px;top:514px;width:1px;height:20px;background:#5A4EB1;"></div><div class="a" style="left:781px;top:515px;width:219px;height:1px;background:#000000;"></div><div class="a" style="left:781px;top:515px;width:1px;height:18px;background:#000000;"></div><div class="a" style="left:781px;top:532px;width:219px;height:1px;background:#ADA8D9;"></div><div class="a" style="left:999px;top:515px;width:1px;height:18px;background:#ADA8D9;"></div><div class="a" style="left:780px;top:533px;width:221px;height:1px;background:#D8D5EC;"></div><div class="a" style="left:1000px;top:514px;width:1px;height:20px;background:#D8D5EC;"></div><div class="t" style="left:524px;top:542.84px;font-size:12px;line-height:12px;color:#000;font-weight:400;letter-spacing:-0.2px;transform:scaleX(0.9);transform-origin:left;">Járat</div><div class="a" style="left:632px;top:539px;width:102px;height:20px;background:#FFFFFF;"></div><div class="a" style="left:632px;top:539px;width:102px;height:1px;background:#5A4EB1;"></div><div class="a" style="left:632px;top:539px;width:1px;height:20px;background:#5A4EB1;"></div><div class="a" style="left:633px;top:540px;width:100px;height:1px;background:#000000;"></div><div class="a" style="left:633px;top:540px;width:1px;height:18px;background:#000000;"></div><div class="a" style="left:633px;top:557px;width:100px;height:1px;background:#ADA8D9;"></div><div class="a" style="left:732px;top:540px;width:1px;height:18px;background:#ADA8D9;"></div><div class="a" style="left:632px;top:558px;width:102px;height:1px;background:#D8D5EC;"></div><div class="a" style="left:733px;top:539px;width:1px;height:20px;background:#D8D5EC;"></div><div class="t" style="left:636px;top:542.84px;font-size:12px;line-height:12px;color:#000;font-weight:400;letter-spacing:-0.1px;transform:scaleX(0.9);transform-origin:left;">1007_1007_NAGY H</div><div class="a" style="left:736px;top:537px;width:38px;height:23px;background:#ADA8D9;"></div><div class="a" style="left:736px;top:537px;width:38px;height:1px;background:#D8D5EC;"></div><div class="a" style="left:736px;top:537px;width:1px;height:23px;background:#D8D5EC;"></div><div class="a" style="left:736px;top:559px;width:38px;height:1px;background:#000000;"></div><div class="a" style="left:773px;top:537px;width:1px;height:23px;background:#000000;"></div><div class="a" style="left:737px;top:558px;width:36px;height:1px;background:#5A4EB1;"></div><div class="a" style="left:772px;top:538px;width:1px;height:21px;background:#5A4EB1;"></div><div class="t" style="left:555px;width:400px;text-align:center;top:542.84px;font-size:12px;line-height:12px;color:#000;font-weight:400;letter-spacing:0px;transform:scaleX(0.9);transform-origin:center;">V.?</div><div class="t" style="left:776px;top:542.84px;font-size:12px;line-height:12px;color:#000;font-weight:400;letter-spacing:-0.2px;transform:scaleX(0.9);transform-origin:left;">Rakodási sorrend</div><div class="a" style="left:858px;top:539px;width:143px;height:20px;background:#FFFFFF;"></div><div class="a" style="left:858px;top:539px;width:143px;height:1px;background:#5A4EB1;"></div><div class="a" style="left:858px;top:539px;width:1px;height:20px;background:#5A4EB1;"></div><div class="a" style="left:859px;top:540px;width:141px;height:1px;background:#000000;"></div><div class="a" style="left:859px;top:540px;width:1px;height:18px;background:#000000;"></div><div class="a" style="left:859px;top:557px;width:141px;height:1px;background:#ADA8D9;"></div><div class="a" style="left:999px;top:540px;width:1px;height:18px;background:#ADA8D9;"></div><div class="a" style="left:858px;top:558px;width:143px;height:1px;background:#D8D5EC;"></div><div class="a" style="left:1000px;top:539px;width:1px;height:20px;background:#D8D5EC;"></div><div class="t" style="left:524px;top:566.84px;font-size:12px;line-height:12px;color:#000;font-weight:400;letter-spacing:-0.2px;transform:scaleX(0.9);transform-origin:left;">Szállítási cím?</div><div class="a" style="left:632px;top:567px;width:13px;height:13px;background:#FFFFFF;"></div><div class="a" style="left:632px;top:567px;width:13px;height:1px;background:#5A4EB1;"></div><div class="a" style="left:632px;top:567px;width:1px;height:13px;background:#5A4EB1;"></div><div class="a" style="left:633px;top:568px;width:11px;height:1px;background:#000000;"></div><div class="a" style="left:633px;top:568px;width:1px;height:11px;background:#000000;"></div><div class="a" style="left:633px;top:578px;width:11px;height:1px;background:#ADA8D9;"></div><div class="a" style="left:643px;top:568px;width:1px;height:11px;background:#ADA8D9;"></div><div class="a" style="left:632px;top:579px;width:13px;height:1px;background:#D8D5EC;"></div><div class="a" style="left:644px;top:567px;width:1px;height:13px;background:#D8D5EC;"></div><svg class="a" style="left:632px;top:567px" width="13" height="13" shape-rendering="crispEdges" fill="#000"><rect x="9" y="3" width="1" height="1"/><rect x="8" y="4" width="1" height="1"/><rect x="9" y="4" width="1" height="1"/><rect x="3" y="5" width="1" height="1"/><rect x="7" y="5" width="1" height="1"/><rect x="8" y="5" width="1" height="1"/><rect x="9" y="5" width="1" height="1"/><rect x="3" y="6" width="1" height="1"/><rect x="4" y="6" width="1" height="1"/><rect x="6" y="6" width="1" height="1"/><rect x="7" y="6" width="1" height="1"/><rect x="8" y="6" width="1" height="1"/><rect x="3" y="7" width="1" height="1"/><rect x="4" y="7" width="1" height="1"/><rect x="5" y="7" width="1" height="1"/><rect x="6" y="7" width="1" height="1"/><rect x="7" y="7" width="1" height="1"/><rect x="4" y="8" width="1" height="1"/><rect x="5" y="8" width="1" height="1"/><rect x="6" y="8" width="1" height="1"/><rect x="5" y="9" width="1" height="1"/></svg><div class="t" style="left:725px;top:566.84px;font-size:12px;line-height:12px;color:#000;font-weight:400;letter-spacing:-0.2px;transform:scaleX(0.9);transform-origin:left;">Szállító cím?</div><div class="a" style="left:793px;top:567px;width:13px;height:13px;background:#FFFFFF;"></div><div class="a" style="left:793px;top:567px;width:13px;height:1px;background:#5A4EB1;"></div><div class="a" style="left:793px;top:567px;width:1px;height:13px;background:#5A4EB1;"></div><div class="a" style="left:794px;top:568px;width:11px;height:1px;background:#000000;"></div><div class="a" style="left:794px;top:568px;width:1px;height:11px;background:#000000;"></div><div class="a" style="left:794px;top:578px;width:11px;height:1px;background:#ADA8D9;"></div><div class="a" style="left:804px;top:568px;width:1px;height:11px;background:#ADA8D9;"></div><div class="a" style="left:793px;top:579px;width:13px;height:1px;background:#D8D5EC;"></div><div class="a" style="left:805px;top:567px;width:1px;height:13px;background:#D8D5EC;"></div><svg class="a" style="left:793px;top:567px" width="13" height="13" shape-rendering="crispEdges" fill="#000"><rect x="9" y="3" width="1" height="1"/><rect x="8" y="4" width="1" height="1"/><rect x="9" y="4" width="1" height="1"/><rect x="3" y="5" width="1" height="1"/><rect x="7" y="5" width="1" height="1"/><rect x="8" y="5" width="1" height="1"/><rect x="9" y="5" width="1" height="1"/><rect x="3" y="6" width="1" height="1"/><rect x="4" y="6" width="1" height="1"/><rect x="6" y="6" width="1" height="1"/><rect x="7" y="6" width="1" height="1"/><rect x="8" y="6" width="1" height="1"/><rect x="3" y="7" width="1" height="1"/><rect x="4" y="7" width="1" height="1"/><rect x="5" y="7" width="1" height="1"/><rect x="6" y="7" width="1" height="1"/><rect x="7" y="7" width="1" height="1"/><rect x="4" y="8" width="1" height="1"/><rect x="5" y="8" width="1" height="1"/><rect x="6" y="8" width="1" height="1"/><rect x="5" y="9" width="1" height="1"/></svg><div class="t" style="left:885px;top:566.84px;font-size:12px;line-height:12px;color:#000;font-weight:400;letter-spacing:-0.2px;transform:scaleX(0.9);transform-origin:left;">Élőállat szállító cím?</div><div class="a" style="left:988px;top:567px;width:12px;height:12px;background:#FFFFFF;"></div><div class="a" style="left:988px;top:567px;width:12px;height:1px;background:#5A4EB1;"></div><div class="a" style="left:988px;top:567px;width:1px;height:12px;background:#5A4EB1;"></div><div class="a" style="left:989px;top:568px;width:10px;height:1px;background:#000000;"></div><div class="a" style="left:989px;top:568px;width:1px;height:10px;background:#000000;"></div><div class="a" style="left:989px;top:577px;width:10px;height:1px;background:#ADA8D9;"></div><div class="a" style="left:998px;top:568px;width:1px;height:10px;background:#ADA8D9;"></div><div class="a" style="left:988px;top:578px;width:12px;height:1px;background:#D8D5EC;"></div><div class="a" style="left:999px;top:567px;width:1px;height:12px;background:#D8D5EC;"></div><div class="t" style="left:524px;top:589.84px;font-size:12px;line-height:12px;color:#000;font-weight:400;letter-spacing:-0.2px;transform:scaleX(0.9);transform-origin:left;">Ügynök/kirendeltség</div><div class="a" style="left:632px;top:586px;width:148px;height:20px;background:#FFFFFF;"></div><div class="a" style="left:632px;top:586px;width:148px;height:1px;background:#5A4EB1;"></div><div class="a" style="left:632px;top:586px;width:1px;height:20px;background:#5A4EB1;"></div><div class="a" style="left:633px;top:587px;width:146px;height:1px;background:#000000;"></div><div class="a" style="left:633px;top:587px;width:1px;height:18px;background:#000000;"></div><div class="a" style="left:633px;top:604px;width:146px;height:1px;background:#ADA8D9;"></div><div class="a" style="left:778px;top:587px;width:1px;height:18px;background:#ADA8D9;"></div><div class="a" style="left:632px;top:605px;width:148px;height:1px;background:#D8D5EC;"></div><div class="a" style="left:779px;top:586px;width:1px;height:20px;background:#D8D5EC;"></div><div class="a" style="left:780px;top:586px;width:221px;height:20px;background:#FFFFFF;"></div><div class="a" style="left:780px;top:586px;width:221px;height:1px;background:#5A4EB1;"></div><div class="a" style="left:780px;top:586px;width:1px;height:20px;background:#5A4EB1;"></div><div class="a" style="left:781px;top:587px;width:219px;height:1px;background:#000000;"></div><div class="a" style="left:781px;top:587px;width:1px;height:18px;background:#000000;"></div><div class="a" style="left:781px;top:604px;width:219px;height:1px;background:#ADA8D9;"></div><div class="a" style="left:999px;top:587px;width:1px;height:18px;background:#ADA8D9;"></div><div class="a" style="left:780px;top:605px;width:221px;height:1px;background:#D8D5EC;"></div><div class="a" style="left:1000px;top:586px;width:1px;height:20px;background:#D8D5EC;"></div><div class="t" style="left:524px;top:612.84px;font-size:12px;line-height:12px;color:#000;font-weight:400;letter-spacing:-0.2px;transform:scaleX(0.9);transform-origin:left;">Beszállító kód</div><div class="a" style="left:632px;top:609px;width:142px;height:20px;background:#FFFFFF;"></div><div class="a" style="left:632px;top:609px;width:142px;height:1px;background:#5A4EB1;"></div><div class="a" style="left:632px;top:609px;width:1px;height:20px;background:#5A4EB1;"></div><div class="a" style="left:633px;top:610px;width:140px;height:1px;background:#000000;"></div><div class="a" style="left:633px;top:610px;width:1px;height:18px;background:#000000;"></div><div class="a" style="left:633px;top:627px;width:140px;height:1px;background:#ADA8D9;"></div><div class="a" style="left:772px;top:610px;width:1px;height:18px;background:#ADA8D9;"></div><div class="a" style="left:632px;top:628px;width:142px;height:1px;background:#D8D5EC;"></div><div class="a" style="left:773px;top:609px;width:1px;height:20px;background:#D8D5EC;"></div><div class="t" style="left:776px;top:612.84px;font-size:12px;line-height:12px;color:#000;font-weight:400;letter-spacing:-0.2px;transform:scaleX(0.9);transform-origin:left;">Hivatkozás</div><div class="a" style="left:858px;top:609px;width:143px;height:20px;background:#FFFFFF;"></div><div class="a" style="left:858px;top:609px;width:143px;height:1px;background:#5A4EB1;"></div><div class="a" style="left:858px;top:609px;width:1px;height:20px;background:#5A4EB1;"></div><div class="a" style="left:859px;top:610px;width:141px;height:1px;background:#000000;"></div><div class="a" style="left:859px;top:610px;width:1px;height:18px;background:#000000;"></div><div class="a" style="left:859px;top:627px;width:141px;height:1px;background:#ADA8D9;"></div><div class="a" style="left:999px;top:610px;width:1px;height:18px;background:#ADA8D9;"></div><div class="a" style="left:858px;top:628px;width:143px;height:1px;background:#D8D5EC;"></div><div class="a" style="left:1000px;top:609px;width:1px;height:20px;background:#D8D5EC;"></div><div class="t" style="left:524px;top:635.84px;font-size:12px;line-height:12px;color:#000;font-weight:400;letter-spacing:-0.2px;transform:scaleX(0.9);transform-origin:left;">Vállalat megjegyzés</div><div class="a" style="left:632px;top:632px;width:369px;height:20px;background:#FFFFFF;"></div><div class="a" style="left:632px;top:632px;width:369px;height:1px;background:#5A4EB1;"></div><div class="a" style="left:632px;top:632px;width:1px;height:20px;background:#5A4EB1;"></div><div class="a" style="left:633px;top:633px;width:367px;height:1px;background:#000000;"></div><div class="a" style="left:633px;top:633px;width:1px;height:18px;background:#000000;"></div><div class="a" style="left:633px;top:650px;width:367px;height:1px;background:#ADA8D9;"></div><div class="a" style="left:999px;top:633px;width:1px;height:18px;background:#ADA8D9;"></div><div class="a" style="left:632px;top:651px;width:369px;height:1px;background:#D8D5EC;"></div><div class="a" style="left:1000px;top:632px;width:1px;height:20px;background:#D8D5EC;"></div><div class="t" style="left:524px;top:657.84px;font-size:12px;line-height:12px;color:#000;font-weight:400;letter-spacing:-0.2px;transform:scaleX(0.9);transform-origin:left;">Ean kód</div><div class="a" style="left:632px;top:654px;width:142px;height:20px;background:#FFFFFF;"></div><div class="a" style="left:632px;top:654px;width:142px;height:1px;background:#5A4EB1;"></div><div class="a" style="left:632px;top:654px;width:1px;height:20px;background:#5A4EB1;"></div><div class="a" style="left:633px;top:655px;width:140px;height:1px;background:#000000;"></div><div class="a" style="left:633px;top:655px;width:1px;height:18px;background:#000000;"></div><div class="a" style="left:633px;top:672px;width:140px;height:1px;background:#ADA8D9;"></div><div class="a" style="left:772px;top:655px;width:1px;height:18px;background:#ADA8D9;"></div><div class="a" style="left:632px;top:673px;width:142px;height:1px;background:#D8D5EC;"></div><div class="a" style="left:773px;top:654px;width:1px;height:20px;background:#D8D5EC;"></div><div class="t" style="left:776px;top:657.84px;font-size:12px;line-height:12px;color:#000;font-weight:400;letter-spacing:-0.2px;transform:scaleX(0.9);transform-origin:left;">Raktár számláz?</div><div class="a" style="left:923px;top:658px;width:12px;height:12px;background:#FFFFFF;"></div><div class="a" style="left:923px;top:658px;width:12px;height:1px;background:#5A4EB1;"></div><div class="a" style="left:923px;top:658px;width:1px;height:12px;background:#5A4EB1;"></div><div class="a" style="left:924px;top:659px;width:10px;height:1px;background:#000000;"></div><div class="a" style="left:924px;top:659px;width:1px;height:10px;background:#000000;"></div><div class="a" style="left:924px;top:668px;width:10px;height:1px;background:#ADA8D9;"></div><div class="a" style="left:933px;top:659px;width:1px;height:10px;background:#ADA8D9;"></div><div class="a" style="left:923px;top:669px;width:12px;height:1px;background:#D8D5EC;"></div><div class="a" style="left:934px;top:658px;width:1px;height:12px;background:#D8D5EC;"></div><div class="t" style="left:524px;top:680.84px;font-size:12px;line-height:12px;color:#000;font-weight:400;letter-spacing:-0.2px;transform:scaleX(0.9);transform-origin:left;">Élőállat átvétel ár típus</div><div class="a" style="left:632px;top:677px;width:369px;height:20px;background:#FFFFFF;"></div><div class="a" style="left:632px;top:677px;width:369px;height:1px;background:#5A4EB1;"></div><div class="a" style="left:632px;top:677px;width:1px;height:20px;background:#5A4EB1;"></div><div class="a" style="left:633px;top:678px;width:367px;height:1px;background:#000000;"></div><div class="a" style="left:633px;top:678px;width:1px;height:18px;background:#000000;"></div><div class="a" style="left:633px;top:695px;width:367px;height:1px;background:#ADA8D9;"></div><div class="a" style="left:999px;top:678px;width:1px;height:18px;background:#ADA8D9;"></div><div class="a" style="left:632px;top:696px;width:369px;height:1px;background:#D8D5EC;"></div><div class="a" style="left:1000px;top:677px;width:1px;height:20px;background:#D8D5EC;"></div><div class="a" style="left:983px;top:679px;width:16px;height:16px;background:#ADA8D9;"></div><div class="a" style="left:983px;top:679px;width:16px;height:1px;background:#D8D5EC;"></div><div class="a" style="left:983px;top:679px;width:1px;height:16px;background:#D8D5EC;"></div><div class="a" style="left:983px;top:694px;width:16px;height:1px;background:#000000;"></div><div class="a" style="left:998px;top:679px;width:1px;height:16px;background:#000000;"></div><div class="a" style="left:984px;top:693px;width:14px;height:1px;background:#5A4EB1;"></div><div class="a" style="left:997px;top:680px;width:1px;height:14px;background:#5A4EB1;"></div><svg class="a" style="left:983px;top:679px" width="16" height="16" viewBox="0 0 16 16"><path d="M4.5 6.5 L11.5 6.5 L8 10Z" fill="#000"/></svg><div class="a" style="left:4px;top:741px;width:67px;height:16px;background:#ADA8D9;"></div><div class="a" style="left:4px;top:741px;width:67px;height:1px;background:#5A4EB1;"></div><div class="a" style="left:4px;top:741px;width:1px;height:16px;background:#5A4EB1;"></div><div class="a" style="left:4px;top:756px;width:67px;height:1px;background:#D8D5EC;"></div><div class="a" style="left:70px;top:741px;width:1px;height:16px;background:#D8D5EC;"></div><div class="t" style="left:6px;top:743.69px;font-size:11px;line-height:11px;color:#000;font-weight:400;letter-spacing:0px;">-v1.89-pre1X</div><div class="a" style="left:73px;top:741px;width:98px;height:16px;background:#ADA8D9;"></div><div class="a" style="left:73px;top:741px;width:98px;height:1px;background:#5A4EB1;"></div><div class="a" style="left:73px;top:741px;width:1px;height:16px;background:#5A4EB1;"></div><div class="a" style="left:73px;top:756px;width:98px;height:1px;background:#D8D5EC;"></div><div class="a" style="left:170px;top:741px;width:1px;height:16px;background:#D8D5EC;"></div><div class="t" style="left:75px;top:743.69px;font-size:11px;line-height:11px;color:#000;font-weight:400;letter-spacing:0px;">7 / 16</div><div class="a" style="left:173px;top:742px;width:18px;height:15px;background:#ADA8D9;"></div><div class="a" style="left:173px;top:742px;width:18px;height:1px;background:#5A4EB1;"></div><div class="a" style="left:173px;top:742px;width:1px;height:15px;background:#5A4EB1;"></div><div class="a" style="left:173px;top:756px;width:18px;height:1px;background:#D8D5EC;"></div><div class="a" style="left:190px;top:742px;width:1px;height:15px;background:#D8D5EC;"></div><svg class="a" style="left:173px;top:742px" width="18" height="15" viewBox="0 0 18 15"><circle cx="7.5" cy="6.5" r="4.5" fill="#fff"/><path d="M4.3 9.7 A4.5 4.5 0 0 1 10.7 3.3" fill="none" stroke="#000" stroke-width="1.3"/></svg><div class="a" style="left:193px;top:741px;width:806px;height:16px;background:#ADA8D9;"></div><div class="a" style="left:193px;top:741px;width:806px;height:1px;background:#5A4EB1;"></div><div class="a" style="left:193px;top:741px;width:1px;height:16px;background:#5A4EB1;"></div><div class="a" style="left:193px;top:756px;width:806px;height:1px;background:#D8D5EC;"></div><div class="a" style="left:998px;top:741px;width:1px;height:16px;background:#D8D5EC;"></div><div class="t" style="left:194px;top:743.69px;font-size:11px;line-height:11px;color:#000;font-weight:400;letter-spacing:0.2px;">(*)A partner neve</div><svg class="a" style="left:1001px;top:743px" width="14" height="14" viewBox="0 0 14 14"><path d="M13 3 L3 13 M13 7 L7 13 M13 11 L11 13" stroke="#5A4EB1" stroke-width="1"/><path d="M13 4 L4 13 M13 8 L8 13 M13 12 L12 13" stroke="#fff" stroke-width="1"/></svg><div class="a" style="left:1016px;top:100px;width:1px;height:660px;background:#5A4EB1;"></div><div class="a" style="left:1017px;top:100px;width:1px;height:660px;background:#000000;"></div><div class="a" style="left:1018px;top:78px;width:1px;height:22px;background:#5A4EB1;"></div><div class="a" style="left:0px;top:758px;width:1018px;height:1px;background:#5A4EB1;"></div><div class="a" style="left:0px;top:759px;width:1018px;height:1px;background:#000000;"></div><div class="a" style="left:1019px;top:78px;width:1px;height:686px;background:#D8D5EC;"></div><div class="a" style="left:0px;top:763px;width:1020px;height:1px;background:#D8D5EC;"></div><div class="a" style="left:1022px;top:78px;width:1px;height:690px;background:#5A4EB1;"></div><div class="a" style="left:1023px;top:78px;width:1px;height:690px;background:#000000;"></div><div class="a" style="left:0px;top:78px;width:1px;height:680px;background:#D8D5EC;"></div><div class="a" style="left:161px;top:294px;width:702px;height:174px;background:#ADA8D9;"></div><div class="a" style="left:162px;top:295px;width:699px;height:1px;background:#D8D5EC;"></div><div class="a" style="left:162px;top:295px;width:1px;height:171px;background:#D8D5EC;"></div><div class="a" style="left:862px;top:294px;width:1px;height:174px;background:#000000;"></div><div class="a" style="left:161px;top:467px;width:702px;height:1px;background:#000000;"></div><div class="a" style="left:861px;top:295px;width:1px;height:172px;background:#5A4EB1;"></div><div class="a" style="left:162px;top:466px;width:700px;height:1px;background:#5A4EB1;"></div><div class="a" style="left:165px;top:298px;width:694px;height:22px;background:linear-gradient(to right,#5A4EB1,#C497D3)"></div><div class="a" style="left:167px;top:299px;width:20px;height:20px;background:#FFFFFF;"></div><svg class="a" style="left:167px;top:299px" width="20" height="20" viewBox="0 0 20 20"><path d="M5.2 8.3 A5.3 5.3 0 1 1 10.5 15.3" fill="none" stroke="#4A74C0" stroke-width="2.6"/></svg><div class="t" style="left:189px;top:300.61px;font-size:17px;line-height:17px;color:#fff;font-weight:400;letter-spacing:0.55px;-webkit-text-stroke:0.3px #fff">Járat besorolások - Nagy Hús Kft. (6750 Algyő, Fő út 13.)</div><div class="a" style="left:795px;top:300px;width:20px;height:18px;background:#ADA8D9;"></div><div class="a" style="left:795px;top:300px;width:20px;height:1px;background:#D8D5EC;"></div><div class="a" style="left:795px;top:300px;width:1px;height:18px;background:#D8D5EC;"></div><div class="a" style="left:795px;top:317px;width:20px;height:1px;background:#000000;"></div><div class="a" style="left:814px;top:300px;width:1px;height:18px;background:#000000;"></div><div class="a" style="left:796px;top:316px;width:18px;height:1px;background:#5A4EB1;"></div><div class="a" style="left:813px;top:301px;width:1px;height:16px;background:#5A4EB1;"></div><div class="a" style="left:815px;top:300px;width:20px;height:18px;background:#ADA8D9;"></div><div class="a" style="left:815px;top:300px;width:20px;height:1px;background:#D8D5EC;"></div><div class="a" style="left:815px;top:300px;width:1px;height:18px;background:#D8D5EC;"></div><div class="a" style="left:815px;top:317px;width:20px;height:1px;background:#000000;"></div><div class="a" style="left:834px;top:300px;width:1px;height:18px;background:#000000;"></div><div class="a" style="left:816px;top:316px;width:18px;height:1px;background:#5A4EB1;"></div><div class="a" style="left:833px;top:301px;width:1px;height:16px;background:#5A4EB1;"></div><div class="a" style="left:837px;top:300px;width:20px;height:18px;background:#ADA8D9;"></div><div class="a" style="left:837px;top:300px;width:20px;height:1px;background:#D8D5EC;"></div><div class="a" style="left:837px;top:300px;width:1px;height:18px;background:#D8D5EC;"></div><div class="a" style="left:837px;top:317px;width:20px;height:1px;background:#000000;"></div><div class="a" style="left:856px;top:300px;width:1px;height:18px;background:#000000;"></div><div class="a" style="left:838px;top:316px;width:18px;height:1px;background:#5A4EB1;"></div><div class="a" style="left:855px;top:301px;width:1px;height:16px;background:#5A4EB1;"></div><svg class="a" style="left:795px;top:300px" width="20" height="18" viewBox="0 0 20 18"><rect x="5" y="12" width="7" height="2" fill="#000"/></svg><svg class="a" style="left:815px;top:300px" width="20" height="18" viewBox="0 0 20 18"><rect x="4.5" y="4.5" width="10" height="9" fill="none" stroke="#000"/><rect x="4" y="4" width="11" height="2" fill="#000"/></svg><svg class="a" style="left:837px;top:300px" width="20" height="18" viewBox="0 0 20 18"><path d="M5.5 5.5 L13.5 13.5 M13.5 5.5 L5.5 13.5" stroke="#000" stroke-width="2"/></svg><div class="a" style="left:177px;top:335px;width:55px;height:17px;background:#CCCCCC;"></div><div class="t" style="left:182px;top:336.84px;font-size:12px;line-height:12px;color:#000;font-weight:400;letter-spacing:-0.2px;transform:scaleX(0.9);transform-origin:left;">Vállalat</div><div class="a" style="left:177px;top:354px;width:55px;height:17px;background:#FFFFFF;"></div><div class="t" style="left:182px;top:355.84px;font-size:12px;line-height:12px;color:#000;font-weight:400;letter-spacing:-0.2px;transform:scaleX(0.9);transform-origin:left;">X</div><div class="a" style="left:234px;top:335px;width:101px;height:17px;background:#CCCCCC;"></div><div class="t" style="left:239px;top:336.84px;font-size:12px;line-height:12px;color:#000;font-weight:400;letter-spacing:-0.2px;transform:scaleX(0.9);transform-origin:left;">Vállalat név</div><div class="a" style="left:234px;top:354px;width:101px;height:17px;background:#FFFFFF;"></div><div class="t" style="left:239px;top:355.84px;font-size:12px;line-height:12px;color:#000;font-weight:400;letter-spacing:-0.2px;transform:scaleX(0.9);transform-origin:left;">Élelmiszeripari Kft.</div><div class="a" style="left:337px;top:335px;width:159px;height:17px;background:#CCCCCC;"></div><div class="t" style="left:342px;top:336.84px;font-size:12px;line-height:12px;color:#000;font-weight:400;letter-spacing:-0.2px;transform:scaleX(0.9);transform-origin:left;">Járat</div><div class="a" style="left:337px;top:354px;width:159px;height:17px;background:#FFFFFF;"></div><div class="t" style="left:342px;top:355.84px;font-size:12px;line-height:12px;color:#000;font-weight:400;letter-spacing:-0.2px;transform:scaleX(0.9);transform-origin:left;">1007_1007_NAGY HÚS KFT.</div><div class="a" style="left:498px;top:335px;width:77px;height:17px;background:#CCCCCC;"></div><div class="t" style="left:503px;top:336.84px;font-size:12px;line-height:12px;color:#000;font-weight:400;letter-spacing:-0.2px;transform:scaleX(0.9);transform-origin:left;">Illetékesség</div><div class="a" style="left:498px;top:354px;width:77px;height:17px;background:#FFFFFF;"></div><div class="t" style="left:503px;top:355.84px;font-size:12px;line-height:12px;color:#000;font-weight:400;letter-spacing:-0.2px;transform:scaleX(0.9);transform-origin:left;">???</div><div class="a" style="left:577px;top:335px;width:168px;height:17px;background:#CCCCCC;"></div><div class="t" style="left:582px;top:336.84px;font-size:12px;line-height:12px;color:#000;font-weight:400;letter-spacing:-0.2px;transform:scaleX(0.9);transform-origin:left;">Illetékesség név</div><div class="a" style="left:577px;top:354px;width:168px;height:17px;background:#FFFFFF;"></div><div class="t" style="left:582px;top:355.84px;font-size:12px;line-height:12px;color:#000;font-weight:400;letter-spacing:-0.2px;transform:scaleX(0.9);transform-origin:left;">Nem meghatározott illetékesség</div><div class="a" style="left:747px;top:335px;width:76px;height:17px;background:#CCCCCC;"></div><div class="t" style="left:752px;top:336.84px;font-size:12px;line-height:12px;color:#000;font-weight:400;letter-spacing:-0.2px;transform:scaleX(0.9);transform-origin:left;">Megjegyzés</div><div class="a" style="left:747px;top:354px;width:76px;height:17px;background:#FFFFFF;"></div><div class="a" style="left:176px;top:389px;width:673px;height:19px;background:#FFFFFF;"></div><div class="a" style="left:176px;top:389px;width:673px;height:1px;background:#5A4EB1;"></div><div class="a" style="left:176px;top:389px;width:1px;height:19px;background:#5A4EB1;"></div><div class="a" style="left:177px;top:390px;width:671px;height:1px;background:#000000;"></div><div class="a" style="left:177px;top:390px;width:1px;height:17px;background:#000000;"></div><div class="a" style="left:177px;top:406px;width:671px;height:1px;background:#ADA8D9;"></div><div class="a" style="left:847px;top:390px;width:1px;height:17px;background:#ADA8D9;"></div><div class="a" style="left:176px;top:407px;width:673px;height:1px;background:#D8D5EC;"></div><div class="a" style="left:848px;top:389px;width:1px;height:19px;background:#D8D5EC;"></div><div class="a" style="left:179px;top:392px;width:1px;height:13px;background:#000;"></div><div class="a" style="left:336px;top:418px;width:100px;height:26px;background:#000000;"></div><div class="a" style="left:337px;top:419px;width:98px;height:24px;background:#ADA8D9;"></div><div class="a" style="left:337px;top:419px;width:98px;height:1px;background:#D8D5EC;"></div><div class="a" style="left:337px;top:419px;width:1px;height:24px;background:#D8D5EC;"></div><div class="a" style="left:337px;top:442px;width:98px;height:1px;background:#000000;"></div><div class="a" style="left:434px;top:419px;width:1px;height:24px;background:#000000;"></div><div class="a" style="left:338px;top:441px;width:96px;height:1px;background:#5A4EB1;"></div><div class="a" style="left:433px;top:420px;width:1px;height:22px;background:#5A4EB1;"></div><div class="t" style="left:186.0px;width:400px;text-align:center;top:424.44px;font-size:12px;line-height:12px;color:#000;font-weight:400;letter-spacing:0px;transform:scaleX(0.9);transform-origin:center;">OK</div><div class="a" style="left:588px;top:419px;width:98px;height:24px;background:#ADA8D9;"></div><div class="a" style="left:588px;top:419px;width:98px;height:1px;background:#D8D5EC;"></div><div class="a" style="left:588px;top:419px;width:1px;height:24px;background:#D8D5EC;"></div><div class="a" style="left:588px;top:442px;width:98px;height:1px;background:#000000;"></div><div class="a" style="left:685px;top:419px;width:1px;height:24px;background:#000000;"></div><div class="a" style="left:589px;top:441px;width:96px;height:1px;background:#5A4EB1;"></div><div class="a" style="left:684px;top:420px;width:1px;height:22px;background:#5A4EB1;"></div><div class="t" style="left:437.0px;width:400px;text-align:center;top:424.44px;font-size:12px;line-height:12px;color:#000;font-weight:400;letter-spacing:0px;transform:scaleX(0.9);transform-origin:center;">Mégsem</div><svg class="a" style="left:0;top:0" width="1024" height="80" viewBox="0 0 1024 80"><defs>
<linearGradient id="gb" x1="0" y1="0" x2="0" y2="1"><stop offset="0" stop-color="#9CC8FF"/><stop offset="0.45" stop-color="#2A82F8"/><stop offset="1" stop-color="#1060E0"/></linearGradient>
<linearGradient id="gg" x1="0" y1="0" x2="0" y2="1"><stop offset="0" stop-color="#60F060"/><stop offset="1" stop-color="#10A010"/></linearGradient>
<linearGradient id="go" x1="0" y1="0" x2="1" y2="1"><stop offset="0" stop-color="#FFE040"/><stop offset="1" stop-color="#F06000"/></linearGradient>
<linearGradient id="gf" x1="0" y1="0" x2="1" y2="1"><stop offset="0" stop-color="#FFFFFF"/><stop offset="0.5" stop-color="#2070F0"/><stop offset="1" stop-color="#0020C0"/></linearGradient>
<radialGradient id="gi" cx="0.4" cy="0.3" r="0.7"><stop offset="0" stop-color="#B0DCFF"/><stop offset="0.5" stop-color="#2A80F0"/><stop offset="1" stop-color="#0A40C0"/></radialGradient>
<linearGradient id="gr" x1="0" y1="0" x2="0" y2="1"><stop offset="0" stop-color="#FF6060"/><stop offset="1" stop-color="#D00000"/></linearGradient>
</defs><path d="M17.5 62.5 L18.5 55 L21 57 L24.5 55.5 L28.5 58.5 L29 61.5 L22.5 69.5 Z" fill="#F4F4FF" stroke="#5A50C8" stroke-width="1.4"/><path d="M32.8 55.2 L24.8 63.6 L28.6 63.6 L24.6 71 L34 62 L30.2 62 L33.5 55.2 Z" fill="url(#go)" stroke="#E04000" stroke-width="0.9" stroke-linejoin="round"/><path d="M68.5 58.5 L73 58.5 L74 60 L74 70 L68.5 70 Z" fill="#8CD0F8" stroke="#1040D0" stroke-width="1.2"/><path d="M72 61 L77 56.5 L81 59 L82 61 Z" fill="#F4F0FF" stroke="#3040A0" stroke-width="0.8"/><path d="M70 61.5 L84 61.5 L82.5 70.5 L68.5 70.5 Z" fill="url(#gf)" stroke="#0030C0" stroke-width="1.2"/><rect x="121" y="56" width="14" height="14" fill="#18184A"/><rect x="122" y="57" width="11" height="11" fill="#C8C8E8"/><rect x="122" y="57" width="2" height="11" fill="#E8E8FF"/><rect x="124" y="57" width="8" height="4" fill="#FFFFFF"/><rect x="124.5" y="57.5" width="1.5" height="1.5" fill="#404080"/><rect x="123" y="61" width="10" height="1.6" fill="#505088"/><rect x="124" y="63" width="8" height="5" fill="#D8D4F0"/><path d="M176.5 57 L171 62.5 L174.5 63 Q176 69 181 69.5 Q185 69.5 187.5 64 L185.5 63.5 Q183 66.5 180 65.5 Q178.5 64.5 178.5 63 L181.5 62.5 Z" fill="url(#gg)" stroke="#007000" stroke-width="0.7"/><path d="M230 55 L238.5 62.5 L234 63.5 L238.5 68 L238.5 70.5 L221.5 70.5 L221.5 68 L226 63.5 L221.5 62.5 Z" fill="url(#gb)" stroke="#0A3AB0" stroke-width="1"/><path d="M275 63 L286.5 55 L286.5 71 Z" fill="url(#gb)" stroke="#0A3AB0" stroke-width="1.2" stroke-linejoin="round"/><path d="M338 63 L326.5 55 L326.5 71 Z" fill="url(#gb)" stroke="#0A3AB0" stroke-width="1.2" stroke-linejoin="round"/><path d="M384 71 L392.5 63.5 L388 62.5 L392.5 58 L392.5 55.5 L375.5 55.5 L375.5 58 L380 62.5 L375.5 63.5 Z" fill="url(#gb)" stroke="#0A3AB0" stroke-width="1"/><rect x="428" y="56.5" width="10.5" height="14" fill="#FFFFFF" stroke="#A0A0A0" stroke-width="0.8"/><path d="M436 56 L438.5 57.5 L432 69 L430.5 69.5 L430.5 68 Z" fill="#F8A020" stroke="#C06000" stroke-width="0.6"/><path d="M480.5 57.5 L480.5 67.5 Q486 71.5 491.5 67.5 L491.5 57.5" fill="url(#gb)" stroke="#0A30B0" stroke-width="1.2"/><ellipse cx="486" cy="57.5" rx="5.5" ry="2.5" fill="#4A9AF8" stroke="#0A30B0" stroke-width="1.2"/><rect x="482" y="60" width="3" height="8" fill="#E8F4FF" opacity="0.85"/><circle cx="537" cy="63" r="7.8" fill="url(#gi)" stroke="#0830A0" stroke-width="1"/><circle cx="537" cy="58.8" r="1.3" fill="#fff"/><path d="M535 61 L538.3 61 L538.3 66.5 L539.5 66.5 L539.5 67.8 L534.8 67.8 L534.8 66.5 L536 66.5 L536 62.3 L535 62.3 Z" fill="#fff"/><rect x="579.5" y="54.5" width="17" height="16.5" fill="#F4F2E0" stroke="#7080E0" stroke-width="1"/><rect x="579.5" y="54.5" width="17" height="2" fill="#3060F0"/><rect x="581" y="58" width="14" height="1" fill="#A0A8C0"/><rect x="587.5" y="58" width="1" height="12" fill="#C0C0C0"/><path d="M634 61 Q635 56 641 55.5 Q645 55.5 647 58 L644.5 59.5 Q642.5 58 640 58.5 Q638 59 637.5 61 L640 61.5 L634.5 65 L631.5 60.5 Z" fill="url(#gg)" stroke="#008000" stroke-width="0.6"/><path d="M645.5 64.5 Q644.5 69.5 638.5 70 Q634.5 70 632.5 67.5 L635 66 Q637 67.5 639.5 67 Q641.5 66.5 642 64.5 L639.5 64 L645 60.5 L648 65 Z" fill="url(#gg)" stroke="#008000" stroke-width="0.6"/><path d="M692 64 L697.5 69.5" stroke="#503000" stroke-width="3.4" stroke-linecap="round"/><path d="M692 64 L697.5 69.5" stroke="#F0A030" stroke-width="2" stroke-linecap="round"/><circle cx="688.5" cy="60.5" r="5" fill="#A8E0FF" stroke="#4060A0" stroke-width="1.1"/><path d="M732 55.5 L751 55.5 M732 69.5 L751 69.5 M734.5 53 L734.5 72 M748.5 53 L748.5 72" stroke="#8880C8" stroke-width="1.2"/><rect x="734.5" y="59.5" width="14" height="6" fill="#A8A8A8" stroke="#303030" stroke-width="1"/><path d="M788 56 Q784 60 788 63.5 Q792 66 795 61 Q791 63 789 60.5 Q788 58 790 56 Z" fill="#D8D8F0" stroke="#7070A0" stroke-width="0.8"/><circle cx="792" cy="58.5" r="2.5" fill="#F0F0FF" stroke="#8080B0" stroke-width="0.6"/><path d="M791.5 65 L795 60.5 L798.5 65 Z" fill="#F8A000"/><rect x="786.5" y="65.5" width="15" height="5.5" rx="1" fill="#FFFFFF" stroke="#404040" stroke-width="1"/><path d="M789 68.5 L799 68.5" stroke="#808080" stroke-width="1" stroke-dasharray="1 1"/><rect x="833.5" y="54.5" width="18" height="16.5" fill="#F0F0F0" stroke="#101010" stroke-width="1"/><path d="M837.5 54.5 L837.5 71" stroke="#202020" stroke-width="1"/><path d="M842 54.5 L842 71" stroke="#202020" stroke-width="1"/><path d="M846.5 54.5 L846.5 71" stroke="#202020" stroke-width="1"/><path d="M833 57.5 L851.5 57.5" stroke="#303030" stroke-width="0.9"/><path d="M833 63.5 L851.5 63.5" stroke="#303030" stroke-width="0.9"/><path d="M833 68 L851.5 68" stroke="#303030" stroke-width="0.9"/><path d="M842 60.5 L848 60.5 L848 57.5 L855 63 L848 68.5 L848 65.5 L842 65.5 Z" fill="#1060F8"/><rect x="888.5" y="54.5" width="18" height="16.5" fill="#F0F0F0" stroke="#101010" stroke-width="1"/><path d="M892.5 54.5 L892.5 71" stroke="#202020" stroke-width="1"/><path d="M897 54.5 L897 71" stroke="#202020" stroke-width="1"/><path d="M901.5 54.5 L901.5 71" stroke="#202020" stroke-width="1"/><path d="M888 57.5 L906.5 57.5" stroke="#303030" stroke-width="0.9"/><path d="M888 63.5 L906.5 63.5" stroke="#303030" stroke-width="0.9"/><path d="M888 68 L906.5 68" stroke="#303030" stroke-width="0.9"/><rect x="900" y="57" width="6" height="13" fill="#FFFFFF"/><path d="M885 60.5 L891 60.5 L891 57.5 L898 63 L891 68.5 L891 65.5 L885 65.5 Z" fill="#1060F8"/><rect x="939.5" y="55.5" width="15.5" height="14" fill="#FFFFFF" stroke="#2050E0" stroke-width="1.2"/><rect x="939.5" y="55.5" width="15.5" height="2.5" fill="#2050E0"/><path d="M941 60 L943.5 60 L941 62.5Z M953.5 60 L951 60 L953.5 62.5Z M941 68 L943.5 68 L941 65.5Z M953.5 68 L951 68 L953.5 65.5Z" fill="#F02000" stroke="#F02000" stroke-width="1"/><path d="M994.5 55 L1001.5 55 L1006 59.5 L1006 66.5 L1001.5 71 L994.5 71 L990 66.5 L990 59.5 Z" fill="url(#gr)" stroke="#A00000" stroke-width="0.8"/><path d="M995 60 L1001 66 M1001 60 L995 66" stroke="#fff" stroke-width="2.2"/></svg></body></html>
